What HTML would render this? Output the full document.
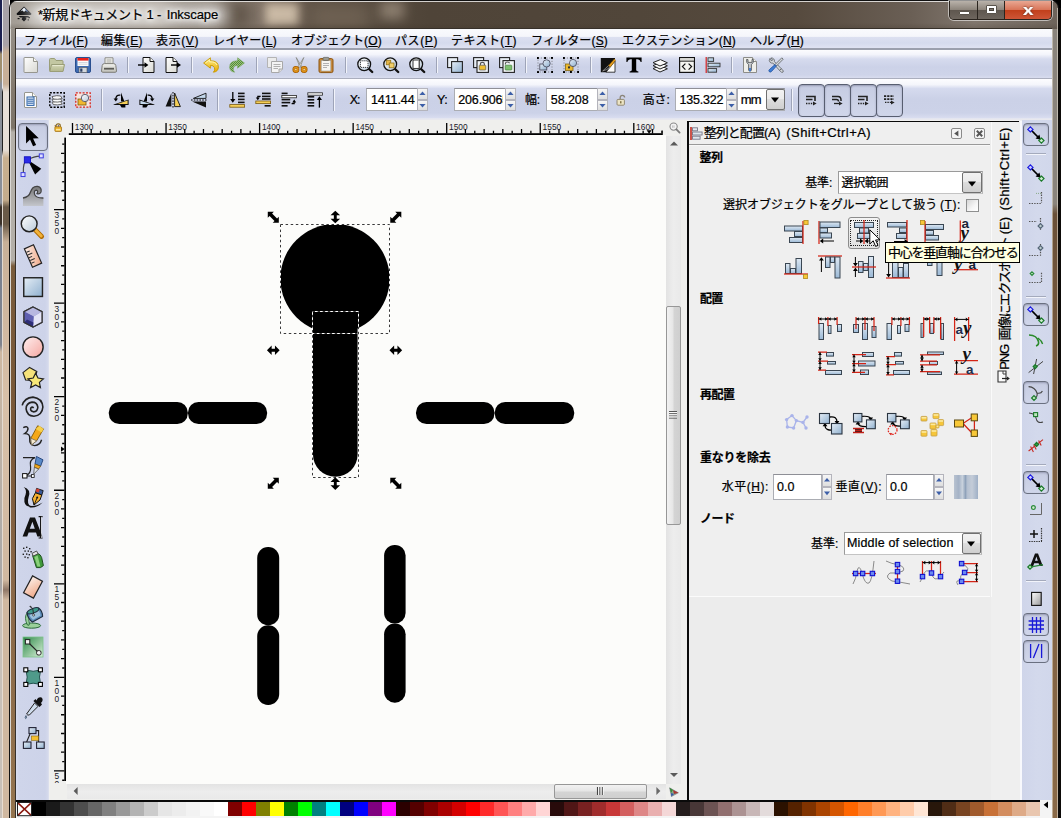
<!DOCTYPE html>
<html lang="ja">
<head>
<meta charset="utf-8">
<title>Inkscape</title>
<style>
html,body{margin:0;padding:0;}
body{width:1061px;height:818px;overflow:hidden;position:relative;background:#000;font-family:"Liberation Sans","Noto Sans CJK JP",sans-serif;font-size:12px;color:#000;}
.a{position:absolute;}
.t{position:absolute;white-space:nowrap;line-height:1;transform-origin:0 0;-webkit-text-stroke:.22px currentColor;}
u{text-decoration:underline;text-underline-offset:1px;}
svg{position:absolute;overflow:visible;}
.b{font-weight:bold;}
.inp{position:absolute;background:#fff;border:1px solid #abadb3;border-top-color:#8e8f96;box-sizing:border-box;}
.spin{position:absolute;width:11px;background:linear-gradient(#f6f6f6,#dedede);border:1px solid #b4b4bc;box-sizing:border-box;}
.tog{position:absolute;box-sizing:border-box;border:1px solid #585e70;border-radius:4px;background:linear-gradient(#c6cce2,#d0d6ea);box-shadow:inset 0 1px 2px rgba(60,60,90,.35);}
.sep{position:absolute;width:1px;background:#9ea4b8;box-shadow:1px 0 0 #f2f4fb;}
.hsep{position:absolute;height:1px;background:#a4aabc;box-shadow:0 1px 0 #f2f4fb;}

.rl{position:absolute;font-size:8.4px;line-height:1;color:#1a1a2a;white-space:nowrap;}
</style>
</head>
<body>
<div class="a" style="left:0;top:0;width:3px;height:818px;background:linear-gradient(#1c2050 0,#1c2050 50px,#a09070 54px,#a09070 78px,#8a8f98 84px,#8a8f98 203px,#3a3028 207px,#3a3028 224px,#788090 228px,#80848e 345px,#cdb8a2 352px,#b0aca8 530px,#a8a6a6 590px,#c8c0b8 596px,#c8c0b8 818px)"></div>
<div class="a" style="left:2.3px;top:0;width:1px;height:818px;background:linear-gradient(#e8e8ee 0,#e8e8ee 88px,#222 92px,#222 150px,#e0d8d0 156px,#e8dcd0 818px)"></div>
<div class="a" style="left:3.2px;top:0;width:5.6px;height:818px;background:linear-gradient(#a8a2a8 0,#a8a2a8 45px,#c8b098 52px,#c8b098 84px,#e8e0d8 92px,#e6ded6 150px,#c8b090 158px,#c4ac8c 200px,#6a5a48 207px,#6a5a48 224px,#c8b098 242px,#d8c0a8 400px,#d0b8a0 580px,#907868 590px,#d0b8a0 600px,#d0b8a0 818px)"></div>
<div class="a" style="left:8.6px;top:0;width:1px;height:818px;background:#f4f2f0"></div>
<div class="a" style="left:9px;top:0;width:1050px;height:830px;border-radius:8px 8px 0 0;background:#111"></div>
<div class="a" id="glass" style="left:10px;top:1px;width:1048px;height:830px;overflow:hidden;border-radius:7px 7px 0 0;background:linear-gradient(90deg,#a39d95 0%,#a9a299 6%,#aaa298 17%,#8f857b 21%,#7a6c5f 25%,#5c5044 29%,#4f4438 40%,#51463a 60%,#564a3e 75%,#6a5f55 86%,#80766d 92%,#6e645b 100%)"><div class="a" style="left:255px;top:2px;width:34px;height:22px;background:#d9c8b2;filter:blur(5px);opacity:.85"></div><div class="a" style="left:160px;top:0;width:40px;height:28px;background:#6e6358;filter:blur(8px);opacity:.8"></div><div class="a" style="left:370px;top:0;width:24px;height:18px;background:#9a8c7c;filter:blur(6px);opacity:.8"></div><div class="a" style="left:300px;top:4px;width:60px;height:24px;background:#7a6c5c;filter:blur(9px);opacity:.7"></div><div class="a" style="left:205px;top:0;width:36px;height:28px;background:#5a4e42;filter:blur(7px);opacity:.8"></div><div class="a" style="left:0;top:0;width:1048px;height:1px;background:rgba(255,255,255,.75)"></div><div class="a" style="left:0;top:0;width:1px;height:830px;background:rgba(255,255,255,.6)"></div><div class="a" style="left:0;top:22px;width:1048px;height:6px;background:linear-gradient(rgba(60,50,40,0),rgba(60,50,40,.25))"></div></div>
<div class="a" style="left:10.6px;top:28px;width:4.2px;height:790px;background:linear-gradient(#958f87 0,#847a6e 62px,#7c7468 100px,#b4b0a8 104px,#b4b0a8 232px,#7a5c3c 238px,#7a5838 400px,#8a6848 560px,#94744e 790px)"></div>
<div class="a" style="left:14.6px;top:28px;width:.7px;height:790px;background:rgba(220,214,200,.7)"></div>
<div class="a" style="left:1052px;top:29px;width:6.4px;height:789px;background:linear-gradient(#8a847c 0,#8a847c 175px,#6a5038 185px,#7a5c40 400px,#8a6a48 789px)"></div>
<div class="a" style="left:1052px;top:29px;width:1px;height:789px;background:rgba(230,224,210,.55)"></div>
<div class="a" style="left:1057.4px;top:8px;width:1px;height:810px;background:rgba(230,224,214,.6)"></div>
<div class="a" style="left:1058.4px;top:8px;width:3px;height:810px;background:#0c0a08"></div>
<div class="a" style="left:15px;top:28.2px;width:1037px;height:1px;background:#3e362e"></div>
<div class="a" style="left:15px;top:28px;width:1037px;height:790px;background:#37312a"></div>
<svg style="left:16px;top:6px" width="16" height="17" viewBox="0 0 16 17"><path d="M8 .5 L15.3 7.6 Q15.8 8.6 14.6 9 L1.4 9 Q.2 8.6 .7 7.6 Z" fill="#0a0a0c"/><path d="M8 1.6 L11.8 5.3 L9.6 4.6 L8 6 L6.6 4.4 L4.4 5.6 Z" fill="#e8eef6"/><path d="M9 2.6 L12.6 6.2 L10 5.2 Z" fill="#3a5f9a"/><path d="M2.6 10 H13.4 L11.6 11.6 H9.6 L10.6 13 L8 15.6 L5.6 13.2 L6.6 11.6 H4.4 Z" fill="#0a0a0c"/><rect x="1.6" y="12" width="2" height="1.2" fill="#0a0a0c"/><rect x="12.2" y="11" width="1.8" height="1.2" fill="#0a0a0c"/><rect x="11.6" y="13.4" width="1.4" height="1" fill="#0a0a0c"/></svg>
<div class="a" style="left:26px;top:3px;width:204px;height:24px;border-radius:12px;background:rgba(255,255,255,.5);filter:blur(6px)"></div>
<div class="t" style="left:38px;top:8px;font-size:13px;letter-spacing:-0.45px;text-shadow:0 0 4px #fff,0 0 6px #fff,0 0 9px #fff,0 0 12px rgba(255,255,255,.9)">*新規ドキュメント</div>
<div class="t" style="left:146.6px;top:8px;font-size:13px;letter-spacing:-3.03px;text-shadow:0 0 4px #fff,0 0 6px #fff,0 0 9px #fff,0 0 12px rgba(255,255,255,.9)">1</div>
<div class="t" style="left:157px;top:8px;font-size:13px;letter-spacing:-0.14px;text-shadow:0 0 4px #fff,0 0 6px #fff,0 0 9px #fff,0 0 12px rgba(255,255,255,.9)">-</div>
<div class="t" style="left:166.7px;top:8px;font-size:13px;letter-spacing:-0.08px;text-shadow:0 0 4px #fff,0 0 6px #fff,0 0 9px #fff,0 0 12px rgba(255,255,255,.9)">Inkscape</div>
<div class="a" style="left:949px;top:1px;width:103px;height:19px;border-radius:0 0 5px 5px;border:1px solid #2a241e;border-top:none;box-shadow:0 0 0 1px rgba(255,255,255,.55);box-sizing:border-box;overflow:hidden"><div class="a" style="left:0;top:0;width:27px;height:19px;background:linear-gradient(#b9b2aa 0,#8d857c 45%,#5f574f 50%,#6f675f 100%);border-right:1px solid #2a241e"></div><div class="a" style="left:28px;top:0;width:26px;height:19px;background:linear-gradient(#b9b2aa 0,#8d857c 45%,#5f574f 50%,#6f675f 100%);border-right:1px solid #2a241e"></div><div class="a" style="left:55px;top:0;width:48px;height:19px;background:linear-gradient(#e9a792 0,#d9765a 45%,#c2401c 50%,#d0583a 100%)"></div><div class="a" style="left:9px;top:10px;width:11px;height:4px;background:#fff;border:1px solid #5a544c;box-sizing:border-box;border-radius:1px"></div><div class="a" style="left:36px;top:4px;width:11px;height:9px;border:1px solid #5a544c;background:#fff;box-sizing:border-box;border-radius:1px"><div class="a" style="left:2px;top:2px;width:5px;height:3px;background:#7d766e;border:1px solid #4a443c;box-sizing:border-box"></div></div><div class="t b" style="left:73px;top:1px;font-size:15px;color:#fff;text-shadow:0 0 2px #5a2010,0 0 1px #5a2010;transform:scaleX(1.25)">x</div></div>
<div class="a" style="left:16px;top:29px;width:1036px;height:789px;background:#f0f0f0"></div>
<div class="a" style="left:16px;top:29px;width:1036px;height:20.5px;background:linear-gradient(#f9fafd 0,#f5f6fb 7.4px,#dce0f0 8.2px,#d5daed 14px,#dfe2f2 19px,#9b9fad 19.5px,#9b9fad 20.5px)"></div>
<div class="t" style="left:24px;top:35px;font-size:12px;letter-spacing:0.09px;">ファイル(<u>F</u>)</div>
<div class="t" style="left:101px;top:35px;font-size:12px;letter-spacing:0.40px;">編集(<u>E</u>)</div>
<div class="t" style="left:156px;top:35px;font-size:12px;letter-spacing:0.60px;">表示(<u>V</u>)</div>
<div class="t" style="left:213px;top:35px;font-size:12px;letter-spacing:0.24px;">レイヤー(<u>L</u>)</div>
<div class="t" style="left:291px;top:35px;font-size:12px;letter-spacing:0.18px;">オブジェクト(<u>O</u>)</div>
<div class="t" style="left:395px;top:35px;font-size:12px;letter-spacing:0.60px;">パス(<u>P</u>)</div>
<div class="t" style="left:451px;top:35px;font-size:12px;letter-spacing:0.43px;">テキスト(<u>T</u>)</div>
<div class="t" style="left:531px;top:35px;font-size:12px;letter-spacing:0.15px;">フィルター(<u>S</u>)</div>
<div class="t" style="left:622px;top:35px;font-size:12px;letter-spacing:0.15px;">エクステンション(<u>N</u>)</div>
<div class="t" style="left:750px;top:35px;font-size:12px;letter-spacing:0.22px;">ヘルプ(<u>H</u>)</div>
<div class="a" style="left:16px;top:49.5px;width:1036px;height:29.5px;background:linear-gradient(#fcfcfe 0,#f3f4fb 4.5px,#d6dbee 9px,#ccd2e8 17px,#ced4e9 25px,#d9ddef 28.2px,#9b9fad 28.6px,#9b9fad 29.5px)"></div>
<div class="a" style="left:16px;top:79px;width:1036px;height:40.5px;background:linear-gradient(#fdfdff 0,#f4f5fb 5.7px,#d5daee 9.6px,#cbd1e7 20px,#ccd2e8 34px,#d9ddf0 39px,#e6e7f0 39.6px,#e8e8ee 40.5px)"></div>
<svg width="0" height="0" style="left:0;top:0"><defs>
<linearGradient id="gPage" x1="0" y1="0" x2="1" y2="1"><stop offset="0" stop-color="#ffffff"/><stop offset="1" stop-color="#d8d8d2"/></linearGradient>
<linearGradient id="gBlue" x1="0" y1="0" x2="1" y2="1"><stop offset="0" stop-color="#e6eef6"/><stop offset="1" stop-color="#8fb0cf"/></linearGradient>
<linearGradient id="gBlueV" x1="0" y1="0" x2="0" y2="1"><stop offset="0" stop-color="#dfe9f3"/><stop offset="1" stop-color="#9bb9d6"/></linearGradient>
<linearGradient id="gFold" x1="0" y1="0" x2="0" y2="1"><stop offset="0" stop-color="#d3d6b4"/><stop offset="1" stop-color="#b3b78e"/></linearGradient>
<linearGradient id="gYel" x1="0" y1="0" x2="0" y2="1"><stop offset="0" stop-color="#fff08a"/><stop offset="1" stop-color="#e8a800"/></linearGradient>
<linearGradient id="gLens" x1="0" y1="0" x2="1" y2="1"><stop offset="0" stop-color="#ffffff"/><stop offset="1" stop-color="#b9c9d9"/></linearGradient>
<linearGradient id="gGray" x1="0" y1="0" x2="0" y2="1"><stop offset="0" stop-color="#f4f4f0"/><stop offset="1" stop-color="#bdbdb6"/></linearGradient>
<linearGradient id="gPink" x1="0" y1="0" x2="1" y2="1"><stop offset="0" stop-color="#fff0f0"/><stop offset="1" stop-color="#f4a6a0"/></linearGradient>
<linearGradient id="gPeach" x1="0" y1="0" x2="1" y2="1"><stop offset="0" stop-color="#fdf0e8"/><stop offset="1" stop-color="#efa888"/></linearGradient>
<linearGradient id="gGreen" x1="0" y1="0" x2="1" y2="1"><stop offset="0" stop-color="#b8e0b0"/><stop offset="1" stop-color="#3f9a52"/></linearGradient>
<pattern id="pDith" width="2" height="2" patternUnits="userSpaceOnUse"><rect width="2" height="2" fill="#9ec27a"/><rect width="1" height="1" fill="#4f8a3a"/><rect x="1" y="1" width="1" height="1" fill="#4f8a3a"/></pattern>
</defs></svg>
<svg style="left:23px;top:57px" width="16" height="16" viewBox="0 0 16 16"><path d="M1 1 Q1 .5 1.5 .5 H10.5 L14.5 4.5 V15 Q14.5 15.5 14 15.5 H1.5 Q1 15.5 1 15 Z" fill="url(#gPage)" stroke="#96968f"/><path d="M10.5 .5 V4.5 H14.5" fill="#fafaf6" stroke="#96968f"/></svg>
<svg style="left:49px;top:57px" width="16" height="16" viewBox="0 0 16 16"><path d="M.5 2.5 Q.5 1.5 1.5 1.5 H5.5 L7 3.5 H13 Q14 3.5 14 4.5 V13.5 H.5 Z" fill="#c3c7a2" stroke="#9a9e78"/><path d="M2.5 7.5 H15.5 L14 14.5 H.8 Z" fill="url(#gFold)" stroke="#9a9e78"/><path d="M3.4 8.6 H14.2" stroke="#e8ead2" fill="none"/></svg>
<svg style="left:75px;top:57px" width="16" height="16" viewBox="0 0 16 16"><rect x=".5" y=".5" width="15" height="15" rx="1.5" fill="#3e6cb3" stroke="#2a4f8f"/><rect x="2.5" y="1" width="11" height="8" fill="#fbfbfb"/><rect x="2.5" y="1" width="11" height="2.6" fill="#e8221a"/><path d="M3.5 5.5H12.5M3.5 7.2H12.5" stroke="#c9cfd8" stroke-width=".8"/><rect x="4" y="10.5" width="8" height="5" fill="#d4d8dc" stroke="#555" stroke-width=".6"/><rect x="5.2" y="11.5" width="2.2" height="3.2" fill="#2a3f66"/></svg>
<svg style="left:101px;top:57px" width="16" height="16" viewBox="0 0 16 16"><path d="M4 7 V.8 H12 V7" fill="#f6f6f2" stroke="#8a8a84"/><path d="M5.5 3H10.5M5.5 5H10.5" stroke="#a0a09a"/><path d="M1.2 8.5 Q1.5 6.6 3.5 6.6 H12.5 Q14.5 6.6 14.8 8.5 L15.5 14 Q15.5 15.3 14.2 15.3 H1.8 Q.5 15.3 .5 14 Z" fill="url(#gGray)" stroke="#7e7e78"/><rect x="3" y="10.8" width="10" height="1.8" fill="#5a5a55"/></svg>
<svg style="left:139px;top:57px" width="16" height="16" viewBox="0 0 16 16"><g transform="translate(3.5,0)"><path d="M.5 .5 H7.5 L11.5 4.5 V15.5 H.5 Z" fill="url(#gPage)" stroke="#111"/><path d="M7.5 .5 V4.5 H11.5" fill="#fafaf6" stroke="#111"/></g><path d="M-1 8 H7" stroke="#000" stroke-width="1.4"/><path d="M5.5 5.2 L9.4 8 L5.5 10.8 Z" fill="#000"/></svg>
<svg style="left:165px;top:57px" width="16" height="16" viewBox="0 0 16 16"><g transform="translate(.5,0)"><path d="M.5 .5 H7.5 L11.5 4.5 V15.5 H.5 Z" fill="url(#gPage)" stroke="#111"/><path d="M7.5 .5 V4.5 H11.5" fill="#fafaf6" stroke="#111"/></g><path d="M6 8 H13" stroke="#000" stroke-width="1.4"/><path d="M12 5.2 L16 8 L12 10.8 Z" fill="#000"/></svg>
<svg style="left:203px;top:57px" width="16" height="16" viewBox="0 0 16 16"><path d="M.6 6 L7.4 .8 V3.8 Q15.5 3.6 15.4 10.2 Q15.2 14.6 10.4 15.2 Q12.6 13.2 11.4 10.6 Q10.6 8.2 7.4 8.4 V11.2 Z" fill="url(#gYel)" stroke="#c89a00" stroke-width=".9"/><path d="M2.4 6 L6.6 2.8 V4.8 Q12.5 4.5 14 8" fill="none" stroke="#fff7b8" stroke-width=".9"/></svg>
<svg style="left:229px;top:57px" width="16" height="16" viewBox="0 0 16 16"><path d="M15.4 6 L8.6 .8 V3.8 Q.5 3.6 .6 10.2 Q.8 14.6 5.6 15.2 Q3.4 13.2 4.6 10.6 Q5.4 8.2 8.6 8.4 V11.2 Z" fill="url(#pDith)" stroke="#7aa860" stroke-width=".6"/></svg>
<svg style="left:267px;top:57px" width="16" height="16" viewBox="0 0 16 16"><path d="M.5 .5 H9.5 V10.5 H.5 Z" fill="#ececec" stroke="#b4b4b4"/><path d="M4.5 4.5 H15.5 V12 L12 15.5 H4.5 Z" fill="#f4f4f4" stroke="#a8a8a8"/><path d="M6.5 7.5H13.5M6.5 9.5H13.5M6.5 11.5H11" stroke="#b0b0b0"/><path d="M15.5 12 H12 V15.5" fill="#ddd" stroke="#a8a8a8"/></svg>
<svg style="left:292px;top:57px" width="16" height="16" viewBox="0 0 16 16"><path d="M4.2 .5 L9.6 9.5 L8 10.4 Z" fill="#d8d8d2" stroke="#7e7e76" stroke-width=".7"/><path d="M11.8 .5 L6.4 9.5 L8 10.4 Z" fill="#eeeeea" stroke="#7e7e76" stroke-width=".7"/><rect x="1" y="9.6" width="5.8" height="5.8" rx="2" fill="#e89a18" stroke="#a85e00"/><rect x="9.2" y="9.6" width="5.8" height="5.8" rx="2" fill="#e89a18" stroke="#a85e00"/><rect x="2.9" y="11.5" width="2" height="2" fill="#f6e2b6" stroke="#a85e00" stroke-width=".5"/><rect x="11.1" y="11.5" width="2" height="2" fill="#f6e2b6" stroke="#a85e00" stroke-width=".5"/></svg>
<svg style="left:318px;top:57px" width="16" height="16" viewBox="0 0 16 16"><rect x="1" y="1.6" width="14" height="14" rx="1.6" fill="#c98a3a" stroke="#8c5410"/><rect x="3.2" y="3.6" width="9.6" height="10.4" fill="#f6f6f2" stroke="#9a9a92" stroke-width=".6"/><rect x="5" y=".4" width="6" height="3" rx="1" fill="#9c9c96" stroke="#5e5e58" stroke-width=".7"/><path d="M5 6.5H11M5 8.5H11M5 10.5H9" stroke="#aaa" stroke-width=".9"/></svg>
<svg style="left:357px;top:57px" width="16" height="16" viewBox="0 0 16 16"><path d="M11 11 L15.2 15" stroke="#111" stroke-width="2.4" stroke-linecap="round"/><circle cx="7.2" cy="7.2" r="6.4" fill="url(#gLens)" stroke="#111" stroke-width="1.3"/><rect x="3.4" y="3.8" width="7.6" height="6.6" fill="#fff" stroke="#111" stroke-width="1" stroke-dasharray="1 1"/></svg>
<svg style="left:383px;top:57px" width="16" height="16" viewBox="0 0 16 16"><path d="M11 11 L15.2 15" stroke="#111" stroke-width="2.4" stroke-linecap="round"/><circle cx="7.2" cy="7.2" r="6.4" fill="url(#gLens)" stroke="#111" stroke-width="1.3"/><rect x="3.2" y="3.2" width="4.6" height="4.6" fill="#e8b84a" stroke="#8a6a10" stroke-width=".7"/><rect x="6.2" y="6" width="4.8" height="4.8" fill="#f2cf6a" stroke="#8a6a10" stroke-width=".7"/></svg>
<svg style="left:409px;top:57px" width="16" height="16" viewBox="0 0 16 16"><path d="M11 11 L15.2 15" stroke="#111" stroke-width="2.4" stroke-linecap="round"/><circle cx="7.2" cy="7.2" r="6.4" fill="url(#gLens)" stroke="#111" stroke-width="1.3"/><rect x="4" y="3" width="6.4" height="8.4" fill="#fff" stroke="#222" stroke-width=".9"/><path d="M9.8 4 V11" stroke="#999" stroke-width="1"/></svg>
<svg style="left:447px;top:57px" width="16" height="16" viewBox="0 0 16 16"><rect x=".6" y=".6" width="10" height="10" fill="#e8eef5" stroke="#222" stroke-width="1.1"/><rect x="4.6" y="4.6" width="10.8" height="10.8" fill="url(#gBlue)" stroke="#222" stroke-width="1.1"/></svg>
<svg style="left:473px;top:57px" width="16" height="16" viewBox="0 0 16 16"><rect x=".6" y=".6" width="10" height="10" fill="#e8eef5" stroke="#222" stroke-width="1.1"/><rect x="4" y="3.6" width="11.4" height="11.8" fill="#f4f6f8" stroke="#222" stroke-width="1.1"/><path d="M7.4 8.4 V7 Q7.4 5.4 9.4 5.4 Q11.4 5.4 11.4 7 V8.4" fill="none" stroke="#555" stroke-width="1.1"/><rect x="6.2" y="8.2" width="6.6" height="4.8" rx=".6" fill="#f0c030" stroke="#555" stroke-width=".7"/></svg>
<svg style="left:499px;top:57px" width="16" height="16" viewBox="0 0 16 16"><rect x=".6" y=".6" width="10" height="10" fill="#e8eef5" stroke="#222" stroke-width="1.1"/><rect x="4" y="3.6" width="11.4" height="11.8" fill="#f4f6f8" stroke="#222" stroke-width="1.1"/><path d="M6.4 7.6 V6.6 Q6.4 5 8.4 5 Q10.4 5 10.4 6.2" fill="none" stroke="#555" stroke-width="1.1"/><rect x="6.2" y="8.2" width="6.6" height="4.8" rx=".6" fill="#7fc070" stroke="#3f7f3a" stroke-width=".7"/></svg>
<svg style="left:537px;top:57px" width="16" height="16" viewBox="0 0 16 16"><rect x="0" y="0" width="2" height="2" fill="#000"/><rect x="14" y="0" width="2" height="2" fill="#000"/><rect x="0" y="14" width="2" height="2" fill="#000"/><rect x="14" y="14" width="2" height="2" fill="#000"/><rect x="7" y="0" width="2" height="2" fill="#000"/><rect x="7" y="14" width="2" height="2" fill="#000"/><path d="M1 1H15V15H1Z" fill="none" stroke="#555" stroke-width=".6" stroke-dasharray="1.2 1.6"/><rect x="2.8" y="7" width="7" height="6" fill="url(#gBlue)" stroke="#445" stroke-width=".8"/><circle cx="9.6" cy="6.4" r="3.6" fill="url(#gBlue)" stroke="#445" stroke-width=".8"/></svg>
<svg style="left:563px;top:57px" width="16" height="16" viewBox="0 0 16 16"><rect x="0" y="0" width="2" height="2" fill="#000"/><rect x="14" y="0" width="2" height="2" fill="#000"/><rect x="0" y="14" width="2" height="2" fill="#000"/><rect x="14" y="14" width="2" height="2" fill="#000"/><rect x="7" y="0" width="2" height="2" fill="#000"/><rect x="7" y="14" width="2" height="2" fill="#000"/><path d="M1 1H15V15H1Z" fill="none" stroke="#555" stroke-width=".6" stroke-dasharray="1.2 1.6"/><rect x="2.4" y="7" width="7.6" height="6.4" fill="#eab830" stroke="#8a6a10" stroke-width=".8"/><circle cx="10" cy="6" r="3.6" fill="url(#gBlue)" stroke="#445" stroke-width=".8"/><rect x="5" y="9.4" width="2" height="2" fill="#333"/></svg>
<svg style="left:600px;top:57px" width="16" height="16" viewBox="0 0 16 16"><path d="M.8 1 H15 V4 L6 15.2 H.8 Z" fill="#111"/><path d="M15 4 V15.2 H6 Z" fill="#fafafa" stroke="#111" stroke-width=".8"/><path d="M2.6 14 Q5 12 8.6 8.4 L10.4 10 Q6.4 13.4 2.6 14Z" fill="#222" stroke="#ddd" stroke-width=".5"/><path d="M8.6 8.4 L14.4 2 L15.6 3.2 L10.4 10 Z" fill="#e8a020" stroke="#8a5a00" stroke-width=".5"/></svg>
<svg style="left:626px;top:57px" width="16" height="16" viewBox="0 0 16 16"><path d="M.4 .6 H15.6 V5 H14.6 Q14 2.2 11 2.2 H10.2 V13 Q10.2 14.4 12.4 14.6 V15.6 H3.6 V14.6 Q5.8 14.4 5.8 13 V2.2 H5 Q2 2.2 1.4 5 H.4 Z" fill="#000"/></svg>
<svg style="left:652px;top:57px" width="16" height="16" viewBox="0 0 16 16"><path d="M1 11.6 L8.4 8.6 L15.4 11.8 L8 15 Z" fill="#fafafa" stroke="#222" stroke-width="1"/><path d="M1 8.6 L8.4 5.6 L15.4 8.8 L8 12 Z" fill="#fafafa" stroke="#222" stroke-width="1"/><path d="M1 5.6 L8.4 2.6 L15.4 5.8 L8 9 Z" fill="#fafafa" stroke="#222" stroke-width="1"/></svg>
<svg style="left:679px;top:57px" width="16" height="16" viewBox="0 0 16 16"><rect x=".6" y=".6" width="14.8" height="14.8" fill="#f4f4f0" stroke="#111" stroke-width="1.2"/><rect x="1.2" y="1.2" width="13.6" height="2.6" fill="#d8d8d4"/><path d="M1 4.2H15" stroke="#111" stroke-width=".9"/><path d="M6.4 6.6 L3.4 9.6 L6.4 12.6M9.6 6.6 L12.6 9.6 L9.6 12.6" fill="none" stroke="#111" stroke-width="1.2"/></svg>
<svg style="left:705px;top:57px" width="16" height="16" viewBox="0 0 16 16"><path d="M1.2 0V16" stroke="#d42020" stroke-width="1.2"/><rect x="3" y=".8" width="5.6" height="3.6" fill="url(#gBlue)" stroke="#333" stroke-width=".9"/><rect x="3" y="6.2" width="12" height="3.6" fill="url(#gBlue)" stroke="#333" stroke-width=".9"/><rect x="3" y="11.6" width="8.6" height="3.6" fill="url(#gBlue)" stroke="#333" stroke-width=".9"/></svg>
<svg style="left:742px;top:57px" width="16" height="16" viewBox="0 0 16 16"><path d="M1.5 .5 H10.5 L14.5 4.5 V15.5 H1.5 Z" fill="#eeeeea" stroke="#8c8c88"/><path d="M10.5 .5 V4.5 H14.5" fill="#fafaf6" stroke="#8c8c88"/><path d="M4.6 2.4 Q4 6.4 6.6 7.4 V13.4 Q8 14.6 9.4 13.4 V7.4 Q12 6.4 11.4 2.4 L10 2.6 V5.4 H6 V2.6 Z" fill="#c8ccd0" stroke="#4a4e52" stroke-width=".8"/><rect x="7.2" y="11" width="1.6" height="3.4" fill="#2f6fd0"/></svg>
<svg style="left:768px;top:57px" width="16" height="16" viewBox="0 0 16 16"><path d="M2 1.4 Q.4 3.6 2.2 5.4 Q3.4 6.4 4.8 6 L11.6 13.4 L13.4 11.8 L6.4 4.6 Q6.8 3 5.6 1.8 Q4.4 .6 2.8 1 L4.6 2.8 L3.6 4 Z" fill="#d4d8dc" stroke="#5a5e62" stroke-width=".8"/><path d="M13.8 .8 L15.2 2.2 L8.4 9 L7 7.6 Z" fill="#d4d8dc" stroke="#5a5e62" stroke-width=".8"/><path d="M7 7.6 L8.4 9 L3.4 14.6 Q2.2 15.6 1.2 14.6 Q.4 13.6 1.4 12.6 Z" fill="#3f7fd8" stroke="#1f4f9a" stroke-width=".8"/><path d="M11.6 13.4 L13.4 11.8 L15.4 14 Q15.4 15.6 13.6 15.4Z" fill="#d4d8dc" stroke="#5a5e62" stroke-width=".8"/></svg>
<div class="sep" style="left:127px;top:57px;height:16px"></div>
<div class="sep" style="left:191px;top:57px;height:16px"></div>
<div class="sep" style="left:255.5px;top:57px;height:16px"></div>
<div class="sep" style="left:344.5px;top:57px;height:16px"></div>
<div class="sep" style="left:435.5px;top:57px;height:16px"></div>
<div class="sep" style="left:524.5px;top:57px;height:16px"></div>
<div class="sep" style="left:589.5px;top:57px;height:16px"></div>
<div class="sep" style="left:730.5px;top:57px;height:16px"></div>
<svg style="left:23px;top:92px" width="16" height="16" viewBox="0 0 16 16"><path d="M1.5 1 Q1.5 .5 2 .5 H9.5 L13.5 4.5 V15 Q13.5 15.5 13 15.5 H2 Q1.5 15.5 1.5 15 Z" fill="#fbfbfb" stroke="#96968f"/><path d="M9.5 .5 V4.5 H13.5" fill="#fafaf6" stroke="#96968f"/><rect x="4" y="5" width="7" height="8.4" fill="#e6eef8" stroke="#2a62a8" stroke-width="1"/><path d="M4.5 7.2H10.5M4.5 9.2H10.5M4.5 11.2H10.5" stroke="#2a62a8" stroke-width="1"/></svg>
<svg style="left:49px;top:92px" width="16" height="16" viewBox="0 0 16 16"><rect x=".8" y=".8" width="14.4" height="14.4" fill="none" stroke="#000" stroke-width="1.4" stroke-dasharray="2 1.4"/><path d="M3 10.2 Q8 8.6 11.6 9.6 L13.2 12.2 Q8 13.4 4.4 12.6 Z" fill="#fafafa" stroke="#444" stroke-width=".8"/><path d="M3 7.4 Q8 5.8 11.6 6.8 L13.2 9.4 Q8 10.6 4.4 9.8 Z" fill="#fafafa" stroke="#444" stroke-width=".8"/><path d="M3 4.6 Q8 3 11.6 4 L13.2 6.6 Q8 7.8 4.4 7 Z" fill="#fafafa" stroke="#444" stroke-width=".8"/></svg>
<svg style="left:75px;top:92px" width="16" height="16" viewBox="0 0 16 16"><rect x=".8" y=".8" width="14.4" height="14.4" fill="#f6e4e0" stroke="#d8241c" stroke-width="1.3" stroke-dasharray="2 1.4"/><rect x="3" y="7" width="8" height="6" fill="#f0b830" stroke="#7a5a10" stroke-width=".8"/><circle cx="10" cy="6" r="3.7" fill="url(#gLens)" stroke="#556" stroke-width=".9"/></svg>
<svg style="left:113px;top:92px" width="16" height="16" viewBox="0 0 16 16"><path d="M8 .4 L11.4 9.6 H8 Z" fill="#000"/><path d="M.6 12.6 L15.6 7.4 V13 H.6Z" fill="#111"/><path d="M4.4 12 L14.6 8.6 V12 Z" fill="#f5cf58"/><path d="M7 13 H12.4 V15.6 H8.6 Z" fill="#000"/><path d="M7.4 3.2 Q2.6 2.6 2.8 7.6" fill="none" stroke="#000" stroke-width="1.3"/><path d="M.6 6.6 H5 L2.8 9.4Z" fill="#000"/></svg>
<svg style="left:139px;top:92px" width="16" height="16" viewBox="0 0 16 16"><path d="M8 .4 L4.6 9.6 H8 Z" fill="#000"/><path d="M.4 7.4 L15.4 12.6 V13 H.4Z" fill="#111"/><path d="M1.4 8.8 L11.6 12 H1.4 Z" fill="#c4d8ec"/><path d="M3.6 13 H9 L7.4 15.6 H3.6 Z" fill="#000"/><path d="M8.6 3.2 Q13.4 2.6 13.2 7.6" fill="none" stroke="#000" stroke-width="1.3"/><path d="M11 6.6 H15.4 L13.2 9.4Z" fill="#000"/></svg>
<svg style="left:164.5px;top:92px" width="16" height="16" viewBox="0 0 16 16"><path d="M6.4 1 V14.6 H.6 Z" fill="#111"/><path d="M9.6 1 V14.6 H15.4 Z" fill="#f5cf58" stroke="#111" stroke-width=".9"/><path d="M8 0V16" stroke="#000" stroke-width="1" stroke-dasharray="1.6 1.2"/></svg>
<svg style="left:191px;top:92px" width="16" height="16" viewBox="0 0 16 16"><path d="M15 9.6 H1 L15 15.4 Z" fill="#111"/><path d="M15 6.4 H2.4 L15 1.2 Z" fill="#c4d8ec" stroke="#111" stroke-width=".9"/><path d="M0 8H16" stroke="#000" stroke-width="1" stroke-dasharray="1.6 1.2"/></svg>
<svg style="left:229px;top:92px" width="16" height="16" viewBox="0 0 16 16"><rect x="9" y="0.6" width="6.6" height="1.6" fill="#111"/><rect x="9" y="3.6" width="6.6" height="1.6" fill="#111"/><rect x="9" y="6.6" width="6.6" height="1.6" fill="#111"/><rect x="9" y="9.6" width="6.6" height="1.6" fill="#111"/><rect x=".8" y="12.6" width="14.8" height="2.6" fill="#f5cf58" stroke="#7a5a10" stroke-width=".8"/><path d="M3.8 0V8" stroke="#000" stroke-width="1.3"/><path d="M1.2 7 H6.4 L3.8 10.8Z" fill="#000"/></svg>
<svg style="left:255px;top:92px" width="16" height="16" viewBox="0 0 16 16"><rect x="7" y="0.6" width="8.6" height="1.6" fill="#111"/><rect x="7" y="3.6" width="8.6" height="1.6" fill="#111"/><rect x="7" y="6.2" width="8.6" height="1.6" fill="#111"/><rect x="9.6" y="13" width="6" height="1.6" fill="#111"/><rect x=".8" y="9" width="14.8" height="2.6" fill="#f5cf58" stroke="#7a5a10" stroke-width=".8"/><path d="M5.6 4.4 H2.8 V6" stroke="#000" stroke-width="1.1" fill="none"/><path d="M.8 5.6 H4.8 L2.8 8.2Z" fill="#000"/></svg>
<svg style="left:281px;top:92px" width="16" height="16" viewBox="0 0 16 16"><rect x="0.6" y="0.6" width="6" height="1.6" fill="#111"/><rect x="0.6" y="6.8" width="8.6" height="1.6" fill="#111"/><rect x="0.6" y="9.8" width="8.6" height="1.6" fill="#111"/><rect x="0.6" y="13" width="6" height="1.6" fill="#111"/><rect x=".8" y="3.4" width="14.6" height="2.4" fill="#fafafa" stroke="#222" stroke-width=".8"/><path d="M10.6 11.6 H13.2 V10" stroke="#000" stroke-width="1.1" fill="none"/><path d="M11.2 10.4 H15.2 L13.2 7.6Z" fill="#000"/></svg>
<svg style="left:307px;top:92px" width="16" height="16" viewBox="0 0 16 16"><rect x="0.6" y="4" width="6.6" height="1.6" fill="#111"/><rect x="0.6" y="7" width="6.6" height="1.6" fill="#111"/><rect x="0.6" y="10" width="6.6" height="1.6" fill="#111"/><rect x="0.6" y="13" width="6.6" height="1.6" fill="#111"/><rect x=".8" y=".8" width="14.6" height="2.4" fill="#fafafa" stroke="#222" stroke-width=".8"/><path d="M12.4 15.6V7" stroke="#000" stroke-width="1.3"/><path d="M9.8 8 H15 L12.4 4.2Z" fill="#000"/></svg>
<div class="sep" style="left:101px;top:89px;height:22px"></div>
<div class="sep" style="left:217.2px;top:89px;height:22px"></div>
<div class="sep" style="left:333px;top:89px;height:22px"></div>
<div class="sep" style="left:791px;top:89px;height:22px"></div>
<div class="t" style="left:349.8px;top:93.5px;font-size:12.5px;letter-spacing:-1.16px;">X:</div>
<div class="inp" style="left:366px;top:88px;width:52px;height:23px;overflow:hidden"></div><div class="a" style="left:368px;top:90px;width:46.6px;height:19px;overflow:hidden"><div class="t" style="left:2.9px;top:4px;font-size:12.5px;letter-spacing:-0.08px;">1411.448</div></div><div class="spin" style="left:417px;top:88px;height:11.5px"></div><svg style="left:417px;top:88px" width="11" height="11"><path d="M2.4 7 L5.5 3.4 L8.6 7Z" fill="#3d5fa8"/></svg><div class="spin" style="left:417px;top:99.5px;height:11.5px"></div><svg style="left:417px;top:99.5px" width="11" height="11"><path d="M2.4 4 L5.5 7.6 L8.6 4Z" fill="#3d5fa8"/></svg>
<div class="t" style="left:437px;top:93.5px;font-size:12.5px;letter-spacing:-0.31px;">Y:</div>
<div class="inp" style="left:454px;top:88px;width:52px;height:23px;overflow:hidden"></div><div class="a" style="left:456px;top:90px;width:46.6px;height:19px;overflow:hidden"><div class="t" style="left:2.3px;top:4px;font-size:12.5px;letter-spacing:-0.17px;">206.9065</div></div><div class="spin" style="left:505px;top:88px;height:11.5px"></div><svg style="left:505px;top:88px" width="11" height="11"><path d="M2.4 7 L5.5 3.4 L8.6 7Z" fill="#3d5fa8"/></svg><div class="spin" style="left:505px;top:99.5px;height:11.5px"></div><svg style="left:505px;top:99.5px" width="11" height="11"><path d="M2.4 4 L5.5 7.6 L8.6 4Z" fill="#3d5fa8"/></svg>
<div class="t" style="left:525px;top:93.5px;font-size:12px;letter-spacing:-0.17px;">幅:</div>
<div class="inp" style="left:546px;top:88px;width:52px;height:23px;overflow:hidden"></div><div class="a" style="left:548px;top:90px;width:46.6px;height:19px;overflow:hidden"><div class="t" style="left:2.8px;top:4px;font-size:12.5px;letter-spacing:-0.07px;">58.208</div></div><div class="spin" style="left:597px;top:88px;height:11.5px"></div><svg style="left:597px;top:88px" width="11" height="11"><path d="M2.4 7 L5.5 3.4 L8.6 7Z" fill="#3d5fa8"/></svg><div class="spin" style="left:597px;top:99.5px;height:11.5px"></div><svg style="left:597px;top:99.5px" width="11" height="11"><path d="M2.4 4 L5.5 7.6 L8.6 4Z" fill="#3d5fa8"/></svg>
<svg style="left:615px;top:94px" width="12" height="12" viewBox="0 0 12 12"><path d="M5.2 5.6 V3.6 Q5.2 1.4 7.4 1.4 Q9.6 1.4 9.6 3.6" fill="none" stroke="#8a8478" stroke-width="1.3"/><rect x="2" y="5.4" width="7.4" height="5.8" rx="1" fill="#ece4c4" stroke="#8a8068" stroke-width=".9"/><rect x="5.2" y="7.2" width="1.2" height="2.2" fill="#6a5a2a"/></svg>
<div class="t" style="left:642.7px;top:93.5px;font-size:12px;letter-spacing:-0.15px;">高さ:</div>
<div class="inp" style="left:675px;top:88px;width:52px;height:23px;overflow:hidden"></div><div class="a" style="left:677px;top:90px;width:46.6px;height:19px;overflow:hidden"><div class="t" style="left:2.5px;top:4px;font-size:12.5px;letter-spacing:-0.20px;">135.322</div></div><div class="spin" style="left:726px;top:88px;height:11.5px"></div><svg style="left:726px;top:88px" width="11" height="11"><path d="M2.4 7 L5.5 3.4 L8.6 7Z" fill="#3d5fa8"/></svg><div class="spin" style="left:726px;top:99.5px;height:11.5px"></div><svg style="left:726px;top:99.5px" width="11" height="11"><path d="M2.4 4 L5.5 7.6 L8.6 4Z" fill="#3d5fa8"/></svg>
<div class="inp" style="left:737px;top:88px;width:48px;height:23px"></div>
<div class="t" style="left:740.8px;top:93px;font-size:13px;letter-spacing:-0.94px;">mm</div>
<div class="a" style="left:766px;top:89px;width:18.5px;height:21px;box-sizing:border-box;border:1px solid #707070;border-radius:2px;background:linear-gradient(#f2f2f2 0,#ebebeb 45%,#dddddd 50%,#cfcfcf 100%)"></div>
<svg style="left:770px;top:97px" width="10" height="6"><path d="M1 .6 H9 L5 5.4Z" fill="#000"/></svg>
<div class="tog" style="left:798px;top:83.5px;width:26.5px;height:33px"></div>
<svg style="left:805px;top:95px" width="12" height="11" viewBox="0 0 12 11"><path d="M1 1.5H10V6M1 4.5H7.5" stroke="#222" stroke-width="1.6" fill="none"/><path d="M1 8.5H9" stroke="#222" stroke-width="1.4" stroke-dasharray="1.4 1"/><path d="M8 6.6 L11.6 8.6 L8 10.6Z" fill="#222"/></svg>
<div class="tog" style="left:824px;top:83.5px;width:26.5px;height:33px"></div>
<svg style="left:831px;top:95px" width="12" height="11" viewBox="0 0 12 11"><path d="M1 1.5H7 Q10 1.5 10 5 V6M1 4.5H5.5 Q7.5 4.5 7.5 6.5" stroke="#222" stroke-width="1.5" fill="none"/><path d="M3 8.5H9" stroke="#222" stroke-width="1.3"/><path d="M8 6.6 L11.6 8.6 L8 10.6Z" fill="#222"/></svg>
<div class="tog" style="left:850px;top:83.5px;width:26.5px;height:33px"></div>
<svg style="left:857px;top:95px" width="12" height="11" viewBox="0 0 12 11"><path d="M1 1.5H10V6M1 4.5H7.5" stroke="#222" stroke-width="1.6" fill="none"/><path d="M1 8.5H9" stroke="#222" stroke-width="1.4" stroke-dasharray="1.4 1"/><path d="M8 6.6 L11.6 8.6 L8 10.6Z" fill="#222"/></svg>
<div class="tog" style="left:876px;top:83.5px;width:26.5px;height:33px"></div>
<svg style="left:883px;top:95px" width="12" height="11" viewBox="0 0 12 11"><path d="M1 1.2H11M1 4.2H11" stroke="#222" stroke-width="1.8" stroke-dasharray="2.2 1"/><path d="M2 7.4H9" stroke="#222" stroke-width="1.3" stroke-dasharray="1.4 1"/><path d="M8 5.6 L11.6 7.6 L8 9.6Z" fill="#222"/></svg>
<div class="a" style="left:50px;top:119.5px;width:637px;height:680.5px;background:#efefed"></div>
<div class="a" style="left:16px;top:119.5px;width:33px;height:680.5px;background:linear-gradient(90deg,#d9ddef 0,#cfd5ea 3px,#cdd3e9 29px,#d4d9ec 32px,#e0e3ee 33px)"></div>
<div class="tog" style="left:18px;top:123px;width:30px;height:27.5px;border-color:#6a7080"></div>
<svg style="left:21px;top:124px" width="24" height="24" viewBox="0 0 24 24"><g transform="translate(-1.6,.4) scale(.95)"><path d="M7 1.6 V20 L11.2 16 L14.4 23 L17.6 21.6 L14.4 14.8 L20.4 14.6 Z" fill="#000"/></g></svg>
<svg style="left:21px;top:154px" width="24" height="24" viewBox="0 0 24 24"><g transform="translate(-2.6,-1.2) scale(1.1)"><path d="M4.5 18.5 Q4 7.5 8.5 6.5 Q14 3 20 3" fill="none" stroke="#444" stroke-width="1"/><path d="M8.4 6.4 L20.8 14.6 L15.2 19.8 Z" fill="#000"/><rect x="5.4" y="3.6" width="5.6" height="5.6" fill="#2a2ae8" stroke="#1010c0" stroke-width=".8"/><rect x="19" y="1" width="3.6" height="3.6" fill="#dfe0ff" stroke="#3a3ae0" stroke-width=".9"/><rect x="2.4" y="18" width="3.6" height="3.6" fill="#dfe0ff" stroke="#3a3ae0" stroke-width=".9"/></g></svg>
<svg style="left:21px;top:184px" width="24" height="24" viewBox="0 0 24 24"><defs><linearGradient id="gTw" x1="0" y1="0" x2="0" y2="1"><stop offset="0" stop-color="#777"/><stop offset="1" stop-color="#c4c6cc"/></linearGradient></defs><path d="M2 14 Q8 13 9.5 8 Q11.5 1.8 16.6 2.4 Q21 3.4 20 8 Q18.6 10.6 16 9.6 Q17.6 7 15.4 6.2 Q12.6 6.4 13.6 10.4 Q15 14.2 22.4 14 V22 H2 Z" fill="url(#gTw)"/><path d="M2 14 Q8 13 9.5 8 Q11.5 1.8 16.6 2.4 Q21 3.4 20 8 Q18.6 10.6 16 9.6 Q17.6 7 15.4 6.2 Q12.6 6.4 13.6 10.4 Q15 14.2 22.4 14" fill="none" stroke="#444" stroke-width="1.3"/></svg>
<svg style="left:21px;top:214px" width="24" height="24" viewBox="0 0 24 24"><g transform="translate(-1.6,0) scale(1.04)"><path d="M14 14 L21.4 21.6" stroke="#b06a00" stroke-width="4.6" stroke-linecap="round"/><path d="M14.4 14.4 L21 21.2" stroke="#f2b23a" stroke-width="2.8" stroke-linecap="round"/><circle cx="9.4" cy="9.4" r="7.6" fill="url(#gLens)" stroke="#222" stroke-width="1.4"/></g></svg>
<svg style="left:21px;top:244px" width="24" height="24" viewBox="0 0 24 24"><g transform="rotate(-24 12 12)"><rect x="7" y="2" width="10" height="20" fill="url(#gPeach)" stroke="#222" stroke-width="1.2"/><path d="M7.6 6H11M7.6 9H12.6M7.6 12H11M7.6 15H12.6M7.6 18H11" stroke="#333" stroke-width="1"/></g></svg>
<svg style="left:21px;top:275px" width="24" height="24" viewBox="0 0 24 24"><g transform="translate(-1.2,-1.2) scale(1.1)"><rect x="3.6" y="3.6" width="17" height="17" fill="url(#gBlue)" stroke="#222" stroke-width="1.3"/></g></svg>
<svg style="left:21px;top:305px" width="24" height="24" viewBox="0 0 24 24"><path d="M12 2 L21 6.6 V17.4 L12 22 L3 17.4 V6.6 Z" fill="#6a6ab8" stroke="#333" stroke-width="1.2"/><path d="M12 2 L21 6.6 L12.6 11.4 L3 6.6Z" fill="#b8b8e0"/><path d="M12.6 11.4 L21 6.6 V17.4 L12 22Z" fill="#e4e4f6"/><path d="M3 6.6 L12.6 11.4 L12 22 L3 17.4Z" fill="#6060b0"/><path d="M6 14.6 L12.4 17.6 L12 22 L3 17.4Z" fill="#2e2e78"/><path d="M12 2 L21 6.6 V17.4 L12 22 L3 17.4 V6.6 Z" fill="none" stroke="#333" stroke-width="1.2"/></svg>
<svg style="left:21px;top:335px" width="24" height="24" viewBox="0 0 24 24"><g transform="translate(-1.2,-1.2) scale(1.1)"><circle cx="12" cy="12" r="9.2" fill="url(#gPink)" stroke="#222" stroke-width="1.3"/></g></svg>
<svg style="left:21px;top:365px" width="24" height="24" viewBox="0 0 24 24"><path d="M8.6 2.4 L15.8 6.6 L13.4 15.6 L4.6 15 L2 7.6 Z" fill="#f5e27a" stroke="#222" stroke-width="1.2"/><path d="M14.6 8.2 L17 13 L22.4 13.8 L18.4 17.4 L19.4 22.6 L14.6 20 L9.6 22.6 L10.8 17.4 L7 13.8 L12.2 13 Z" fill="#f8e878" stroke="#222" stroke-width="1.2"/></svg>
<svg style="left:21px;top:395px" width="24" height="24" viewBox="0 0 24 24"><g transform="translate(-1.8,-1.8) scale(1.15)"><path d="M12.6 12.8 Q11 11.4 10 13 Q9.4 15.6 12.4 16.2 Q16 16 16.2 12.2 Q15.6 7.8 11.2 7.8 Q6 8.6 6 13.6 Q6.6 19.6 12.8 20 Q20 19.4 20.6 12 Q20 4.4 12 3.4 Q4.6 4 2.6 10.6" fill="none" stroke="#222" stroke-width="1.4"/></g></svg>
<svg style="left:21px;top:425px" width="24" height="24" viewBox="0 0 24 24"><g transform="translate(-1,-1) scale(1.08)"><path d="M3 3.4 Q6.6 1.4 7.4 4 Q7.6 6.6 4.4 8.8 Q9.6 8.8 9 14 Q8.6 19.4 13.6 20 Q18.6 19.6 20 14.6" fill="none" stroke="#222" stroke-width="1.3"/><path d="M16.4 1.6 L21.8 4.6 L15.4 15.6 L10.6 19.4 L10 13.2 Z" fill="#f4a81a" stroke="#7a5200" stroke-width=".8"/><path d="M18 1.6 L21.8 4.6 L20 7.8 L14.6 4.6 Z" fill="#f6d04a"/><path d="M10 13.2 L15.4 15.6 L10.6 19.4 Z" fill="#f6ead0" stroke="#555" stroke-width=".6"/></g></svg>
<svg style="left:21px;top:455px" width="24" height="24" viewBox="0 0 24 24"><path d="M2 2.6 H14 Q8 4.6 9.6 12 Q10.4 19 4 21" fill="none" stroke="#222" stroke-width="1.2"/><path d="M4 21 H11" stroke="#222" stroke-width="1"/><rect x="1.6" y="18.6" width="4.4" height="4.4" fill="#fff" stroke="#111" stroke-width="1"/><rect x="10.4" y="19.6" width="2.8" height="2.8" fill="#fff" stroke="#111" stroke-width=".8"/><path d="M15.4 1.4 L22 4.8 L19.6 11.2 L14 9Z" fill="#5a8ac8" stroke="#1f3f78" stroke-width=".9"/><path d="M14 9 L19.6 11.2 L17.6 14 L13.4 12.4Z" fill="#f0a820" stroke="#7a5200" stroke-width=".7"/><path d="M13.4 12.4 L17.6 14 L12.6 19.4Z" fill="#dfe4ea" stroke="#444" stroke-width=".7"/></svg>
<svg style="left:21px;top:485px" width="24" height="24" viewBox="0 0 24 24"><path d="M2.6 2 Q10.4 4.4 7.6 12 Q5.6 18.6 9.6 21.6 Q4.6 22 3.4 17 Q2.6 13.4 4.6 9.4 Q6 5 2.6 2Z" fill="#111"/><path d="M8 20.6 Q14 22 21.6 17.4 Q15.6 23.4 8.8 22.4Z" fill="#111"/><path d="M15.6 3.4 L22.2 5.6 L20.8 10 L14.4 7.8Z" fill="#3a5a98" stroke="#111" stroke-width=".9"/><path d="M15.6 3.4 L18.6 4.4 L17.6 7.4 L14.8 6.4Z" fill="#d84030"/><path d="M14.4 7.8 L20.8 10 L19 15 L13 20 L11.4 13.6Z" fill="#f4b030" stroke="#111" stroke-width="1"/><path d="M13 20 L16 13" stroke="#111" stroke-width=".9"/><circle cx="16.2" cy="12.4" r="1" fill="#111"/></svg>
<svg style="left:21px;top:515px" width="24" height="24" viewBox="0 0 24 24"><path d="M1.6 21.6 L9 2.6 H14 L21.4 21.6 H16.4 L15 17.4 H7.6 L6.2 21.6Z M8.8 13.8 H13.8 L11.4 6.8Z" fill="#111" fill-rule="evenodd"/><path d="M19.6 1.6 V23 M17.6 1.6 H21.6 M17.6 23 H21.6" stroke="#111" stroke-width="1.1" fill="none"/><path d="M20.6 1.6 V23" stroke="#fff" stroke-width=".5"/></svg>
<svg style="left:21px;top:545px" width="24" height="24" viewBox="0 0 24 24"><path d="M11.6 10.6 L16.6 8.4 Q19.6 9.4 20.6 12.4 L22.4 20.6 Q20 23.6 15.4 22.6 Z" fill="#3f9a3a" stroke="#1f4f1f" stroke-width="1"/><path d="M13.4 12 L16.6 10.6 L19.4 21.4 L16.4 21.6Z" fill="#8ad07a"/><path d="M11 8.4 L15.6 6 L17 8.8 L12.4 11Z" fill="#e4e4e4" stroke="#444" stroke-width=".9"/><rect x="2" y="2.6" width="1.4" height="1.4" fill="#222"/><rect x="5" y="1.6" width="1.4" height="1.4" fill="#222"/><rect x="8" y="3" width="1.4" height="1.4" fill="#222"/><rect x="3.4" y="5.4" width="1.4" height="1.4" fill="#222"/><rect x="6.6" y="5.4" width="1.4" height="1.4" fill="#222"/><rect x="9.4" y="6" width="1.4" height="1.4" fill="#222"/><rect x="1.6" y="8.6" width="1.4" height="1.4" fill="#222"/><rect x="5" y="8.4" width="1.4" height="1.4" fill="#222"/><rect x="7.6" y="9" width="1.4" height="1.4" fill="#222"/><rect x="3.4" y="11.4" width="1.4" height="1.4" fill="#222"/><rect x="6.2" y="12" width="1.4" height="1.4" fill="#222"/></svg>
<svg style="left:21px;top:575px" width="24" height="24" viewBox="0 0 24 24"><g transform="rotate(28 12 12)"><rect x="6.4" y="2.4" width="11.2" height="19.2" fill="url(#gPeach)" stroke="#222" stroke-width="1.2"/></g></svg>
<svg style="left:21px;top:605px" width="24" height="24" viewBox="0 0 24 24"><ellipse cx="10.6" cy="20.6" rx="9" ry="2.6" fill="#9ad09a" stroke="#2a6a3a" stroke-width="1"/><path d="M5.6 8.6 Q3 13 6.4 20 Q8.4 21 8.4 19 Q7 14 8.6 11Z" fill="#9ad09a" stroke="#2a6a3a" stroke-width=".9"/><path d="M6 7.6 L17.6 3 Q21.6 6 21.6 11.4 L11.4 17 Q6.6 13.4 6 7.6Z" fill="#5a8ab8" stroke="#1f2f3f" stroke-width="1.1"/><path d="M8 8.6 L17.4 4.8 Q19 7 19.6 10.6 L12 14.8 Q8.6 12 8 8.6Z" fill="#9cc0dc"/><ellipse cx="12" cy="5.8" rx="6.2" ry="2.2" transform="rotate(-21 12 5.8)" fill="#3f9a8a" stroke="#1f2f3f" stroke-width="1"/><path d="M9.6 2.6 Q8 .6 10 1.4 Q12.6 4 12.6 9.6" fill="none" stroke="#222" stroke-width=".9"/><circle cx="12.6" cy="10" r="1.1" fill="#ddd" stroke="#222" stroke-width=".6"/></svg>
<svg style="left:21px;top:635px" width="24" height="24" viewBox="0 0 24 24"><defs><linearGradient id="gGr" x1="0" y1="0" x2="1" y2="1"><stop offset="0" stop-color="#2f8a4a"/><stop offset="1" stop-color="#d8f0d8"/></linearGradient></defs><rect x="2" y="2" width="20" height="20" fill="url(#gGr)" stroke="#7ac08a" stroke-width=".8"/><path d="M6.6 6.8 L17.6 17.6" stroke="#222" stroke-width="1.2"/><rect x="4.4" y="4.6" width="4.4" height="4.4" fill="#f4f4f4" stroke="#222" stroke-width="1"/><rect x="15.6" y="15.6" width="4.4" height="4.4" rx="1.6" fill="#f4f4f4" stroke="#222" stroke-width="1"/></svg>
<svg style="left:21px;top:665px" width="24" height="24" viewBox="0 0 24 24"><path d="M5 5 Q12 7.6 19.6 5 Q17.4 12 19.6 19.4 Q12 17 5 19.4 Q7.4 12 5 5Z" fill="#4f9a8a" stroke="#1f4f4a" stroke-width="1"/><rect x="2.8" y="2.8" width="4" height="4" fill="#fff" stroke="#000" stroke-width="1.1"/><rect x="17.4" y="2.8" width="4" height="4" fill="#fff" stroke="#000" stroke-width="1.1"/><rect x="2.8" y="17.4" width="4" height="4" fill="#fff" stroke="#000" stroke-width="1.1"/><rect x="17.4" y="17.4" width="4" height="4" fill="#fff" stroke="#000" stroke-width="1.1"/></svg>
<svg style="left:21px;top:695px" width="24" height="24" viewBox="0 0 24 24"><path d="M15.4 5.6 Q17 1.4 20.6 2.4 Q23 4.6 20 8 L21 9.6 L18.6 12 L12.4 6 L14.6 4Z" fill="#111"/><path d="M13.6 8 L17 11.4 L8.4 20 Q6.6 20.6 5.6 19 Z" fill="#cfdcec" stroke="#222" stroke-width="1"/><path d="M5 20.6 Q3.4 23.4 4.6 23.6 Q6.4 23.4 5 20.6Z" fill="#8ab0d8" stroke="#345" stroke-width=".7"/></svg>
<svg style="left:21px;top:725px" width="24" height="24" viewBox="0 0 24 24"><g transform="translate(0,1)"><path d="M13 4.6 H17.6 V16 M9 8 L5.6 16" fill="none" stroke="#222" stroke-width="1.1"/><rect x="8" y="1.6" width="7" height="6" fill="url(#gBlue)" stroke="#223" stroke-width="1.1"/><rect x="10.4" y="10" width="7" height="4.4" fill="#f4c030" stroke="#8a6a10" stroke-width=".6"/><rect x="2.4" y="16" width="7.6" height="6.4" fill="url(#gBlue)" stroke="#223" stroke-width="1.1"/><rect x="15.6" y="16" width="7.6" height="6.4" fill="url(#gBlue)" stroke="#223" stroke-width="1.1"/></g></svg>
<div class="a" style="left:50px;top:119.5px;width:637px;height:16px;background:#efefed"></div>
<div class="a" style="left:50px;top:119.5px;width:17px;height:680px;background:#efefed"></div>
<svg style="left:0;top:0" width="700" height="140"><rect x="68.8" y="133.2" width="594" height="2" fill="#000"/><path d="M72.50 133.4V123.0M81.86 133.4V130.8M91.21 133.4V129.0M100.56 133.4V130.8M109.92 133.4V129.0M119.28 133.4V130.8M128.63 133.4V129.0M137.99 133.4V130.8M147.34 133.4V129.0M156.70 133.4V130.8M166.05 133.4V123.0M175.41 133.4V130.8M184.76 133.4V129.0M194.12 133.4V130.8M203.47 133.4V129.0M212.83 133.4V130.8M222.18 133.4V129.0M231.54 133.4V130.8M240.89 133.4V129.0M250.25 133.4V130.8M259.60 133.4V123.0M268.96 133.4V130.8M278.31 133.4V129.0M287.67 133.4V130.8M297.02 133.4V129.0M306.38 133.4V130.8M315.73 133.4V129.0M325.09 133.4V130.8M334.44 133.4V129.0M343.80 133.4V130.8M353.15 133.4V123.0M362.50 133.4V130.8M371.86 133.4V129.0M381.22 133.4V130.8M390.57 133.4V129.0M399.93 133.4V130.8M409.28 133.4V129.0M418.63 133.4V130.8M427.99 133.4V129.0M437.35 133.4V130.8M446.70 133.4V123.0M456.06 133.4V130.8M465.41 133.4V129.0M474.77 133.4V130.8M484.12 133.4V129.0M493.48 133.4V130.8M502.83 133.4V129.0M512.18 133.4V130.8M521.54 133.4V129.0M530.89 133.4V130.8M540.25 133.4V123.0M549.61 133.4V130.8M558.96 133.4V129.0M568.31 133.4V130.8M577.67 133.4V129.0M587.02 133.4V130.8M596.38 133.4V129.0M605.74 133.4V130.8M615.09 133.4V129.0M624.45 133.4V130.8M633.80 133.4V123.0M643.15 133.4V130.8M652.51 133.4V129.0M661.87 133.4V130.8M662.2 133.4V130.6" stroke="#000" stroke-width="1.3"/><path d="M646.6 130.2 h5 l-2.5 3.6Z" fill="#000"/></svg>
<div class="rl" style="left:74.8px;top:123.4px">1300</div>
<div class="rl" style="left:168.3px;top:123.4px">1350</div>
<div class="rl" style="left:261.9px;top:123.4px">1400</div>
<div class="rl" style="left:355.4px;top:123.4px">1450</div>
<div class="rl" style="left:449.0px;top:123.4px">1500</div>
<div class="rl" style="left:542.6px;top:123.4px">1550</div>
<div class="rl" style="left:636.1px;top:123.4px">1600</div>
<svg style="left:0;top:0" width="70" height="800"><rect x="64.3" y="137.6" width="1.9" height="643.4" fill="#000"/><path d="M64.4 144.12H62.2M64.4 153.47H61.0M64.4 162.83H62.2M64.4 172.18H61.0M64.4 181.54H62.2M64.4 190.89H61.0M64.4 200.25H62.2M64.4 209.60H54.0M64.4 218.96H62.2M64.4 228.31H61.0M64.4 237.67H62.2M64.4 247.02H61.0M64.4 256.38H62.2M64.4 265.73H61.0M64.4 275.09H62.2M64.4 284.44H61.0M64.4 293.80H62.2M64.4 303.15H54.0M64.4 312.51H62.2M64.4 321.86H61.0M64.4 331.22H62.2M64.4 340.57H61.0M64.4 349.93H62.2M64.4 359.28H61.0M64.4 368.64H62.2M64.4 377.99H61.0M64.4 387.35H62.2M64.4 396.70H54.0M64.4 406.06H62.2M64.4 415.41H61.0M64.4 424.77H62.2M64.4 434.12H61.0M64.4 443.48H62.2M64.4 452.83H61.0M64.4 462.19H62.2M64.4 471.54H61.0M64.4 480.90H62.2M64.4 490.25H54.0M64.4 499.61H62.2M64.4 508.96H61.0M64.4 518.32H62.2M64.4 527.67H61.0M64.4 537.02H62.2M64.4 546.38H61.0M64.4 555.73H62.2M64.4 565.09H61.0M64.4 574.44H62.2M64.4 583.80H54.0M64.4 593.15H62.2M64.4 602.51H61.0M64.4 611.87H62.2M64.4 621.22H61.0M64.4 630.58H62.2M64.4 639.93H61.0M64.4 649.28H62.2M64.4 658.64H61.0M64.4 668.00H62.2M64.4 677.35H54.0M64.4 686.70H62.2M64.4 696.06H61.0M64.4 705.41H62.2M64.4 714.77H61.0M64.4 724.12H62.2M64.4 733.48H61.0M64.4 742.84H62.2M64.4 752.19H61.0M64.4 761.55H62.2M64.4 770.90H54.0M64.4 780.25H62.2" stroke="#000" stroke-width="1.3"/><path d="M61 446.4 v5.4 l3.6 -2.7Z" fill="#000"/></svg>
<div class="a" style="left:50px;top:136px;width:14px;height:646.6px;overflow:hidden">
<div class="rl" style="left:4.4px;top:74.9px">3</div>
<div class="rl" style="left:4.4px;top:82.9px">5</div>
<div class="rl" style="left:4.4px;top:90.9px">0</div>
<div class="rl" style="left:4.4px;top:168.5px">3</div>
<div class="rl" style="left:4.4px;top:176.5px">0</div>
<div class="rl" style="left:4.4px;top:184.5px">0</div>
<div class="rl" style="left:4.4px;top:262.0px">2</div>
<div class="rl" style="left:4.4px;top:270.0px">5</div>
<div class="rl" style="left:4.4px;top:278.0px">0</div>
<div class="rl" style="left:4.4px;top:355.6px">2</div>
<div class="rl" style="left:4.4px;top:363.6px">0</div>
<div class="rl" style="left:4.4px;top:371.6px">0</div>
<div class="rl" style="left:4.4px;top:449.1px">1</div>
<div class="rl" style="left:4.4px;top:457.1px">5</div>
<div class="rl" style="left:4.4px;top:465.1px">0</div>
<div class="rl" style="left:4.4px;top:542.6px">1</div>
<div class="rl" style="left:4.4px;top:550.6px">0</div>
<div class="rl" style="left:4.4px;top:558.6px">0</div>
<div class="rl" style="left:4.4px;top:636.2px">5</div>
<div class="rl" style="left:4.4px;top:644.2px">0</div>
</div>
<div class="rl" style="left:54.4px;top:124.6px;height:7px;overflow:hidden"><span style="position:relative;top:-3.4px">0</span></div>
<svg style="left:54px;top:123px" width="8.4" height="9" viewBox="0 0 9 10"><path d="M2.2 4.6 V3 Q2.2 1 4.5 1 Q6.8 1 6.8 3 V4.6" fill="none" stroke="#8a6a20" stroke-width="1.3"/><rect x=".8" y="4.2" width="7.4" height="5.2" rx=".8" fill="#f0b830" stroke="#9a6a10" stroke-width=".8"/><rect x="2" y="6.6" width="5" height="1.6" fill="#fbe6a0"/></svg>
<svg style="left:669px;top:122px" width="12" height="12" viewBox="0 0 12 12"><circle cx="4.6" cy="4.6" r="3.6" fill="#f4f4f4" stroke="#8a8a8a" stroke-width="1.1"/><path d="M7.4 7.4 L10.6 10.6" stroke="#7a7a7a" stroke-width="1.8" stroke-linecap="round"/><path d="M3.6 3.4V5.8M5 3.4V5.8" stroke="#aaa" stroke-width=".7"/></svg>
<div class="a" style="left:66.2px;top:135.2px;width:599.6px;height:648.5px;background:#fcfcfa"></div>
<svg style="left:0;top:0" width="700" height="800"><circle cx="335" cy="278.7" r="54.6" fill="#000"/><rect x="313" y="300" width="44.6" height="176.8" rx="22.3" ry="22.3" fill="#000"/><rect x="108.8" y="402" width="79" height="22" rx="10.5" ry="10.5" fill="#000"/><rect x="188" y="402" width="79.1" height="22" rx="10.5" ry="10.5" fill="#000"/><rect x="416" y="402" width="78.5" height="22" rx="10.5" ry="10.5" fill="#000"/><rect x="494.7" y="402" width="79.5" height="22" rx="10.5" ry="10.5" fill="#000"/><rect x="257.2" y="547.1" width="22" height="78.1" rx="10.8" ry="10.8" fill="#000"/><rect x="257.2" y="625.3" width="22" height="79.6" rx="10.8" ry="10.8" fill="#000"/><rect x="384.1" y="544.9" width="21.5" height="78.6" rx="10.6" ry="10.6" fill="#000"/><rect x="384.1" y="623.6" width="21.5" height="79.1" rx="10.6" ry="10.6" fill="#000"/><rect x="280.5" y="224.5" width="109" height="109" fill="none" stroke="#fff" stroke-width="1"/><rect x="280.5" y="224.5" width="109" height="109" fill="none" stroke="#3a3a3a" stroke-width="1" stroke-dasharray="2.5 2.6"/><rect x="312.5" y="311.5" width="46" height="166" fill="none" stroke="#fff" stroke-width="1"/><rect x="312.5" y="311.5" width="46" height="166" fill="none" stroke="#3a3a3a" stroke-width="1" stroke-dasharray="2.5 2.6"/><path d="M-7.8 0 L-3.5 -4.3 L-3.5 -1.8 L3.5 -1.8 L3.5 -4.3 L7.8 0 L3.5 4.3 L3.5 1.8 L-3.5 1.8 L-3.5 4.3 Z" transform="translate(273.3,217.3) rotate(45)" fill="#000"/><path d="M-6.35 0 L-1.65 -4.8 L-1.65 -1.45 L1.65 -1.45 L1.65 -4.8 L6.35 0 L1.65 4.8 L1.65 1.45 L-1.65 1.45 L-1.65 4.8 Z" transform="translate(335.3,217) rotate(90)" fill="#000"/><path d="M-7.8 0 L-3.5 -4.3 L-3.5 -1.8 L3.5 -1.8 L3.5 -4.3 L7.8 0 L3.5 4.3 L3.5 1.8 L-3.5 1.8 L-3.5 4.3 Z" transform="translate(395.8,217.3) rotate(-45)" fill="#000"/><path d="M-6.35 0 L-1.65 -4.8 L-1.65 -1.45 L1.65 -1.45 L1.65 -4.8 L6.35 0 L1.65 4.8 L1.65 1.45 L-1.65 1.45 L-1.65 4.8 Z" transform="translate(273.3,350.3) rotate(0)" fill="#000"/><path d="M-6.35 0 L-1.65 -4.8 L-1.65 -1.45 L1.65 -1.45 L1.65 -4.8 L6.35 0 L1.65 4.8 L1.65 1.45 L-1.65 1.45 L-1.65 4.8 Z" transform="translate(395.8,350.3) rotate(0)" fill="#000"/><path d="M-7.8 0 L-3.5 -4.3 L-3.5 -1.8 L3.5 -1.8 L3.5 -4.3 L7.8 0 L3.5 4.3 L3.5 1.8 L-3.5 1.8 L-3.5 4.3 Z" transform="translate(273.3,483.3) rotate(-45)" fill="#000"/><path d="M-6.35 0 L-1.65 -4.8 L-1.65 -1.45 L1.65 -1.45 L1.65 -4.8 L6.35 0 L1.65 4.8 L1.65 1.45 L-1.65 1.45 L-1.65 4.8 Z" transform="translate(335.3,483.6) rotate(90)" fill="#000"/><path d="M-7.8 0 L-3.5 -4.3 L-3.5 -1.8 L3.5 -1.8 L3.5 -4.3 L7.8 0 L3.5 4.3 L3.5 1.8 L-3.5 1.8 L-3.5 4.3 Z" transform="translate(395.8,483.3) rotate(45)" fill="#000"/></svg>
<div class="a" style="left:666px;top:136px;width:15px;height:648px;background:linear-gradient(90deg,#e3e3e3,#ededed 50%,#e9e9e9)"></div>
<div class="a" style="left:666px;top:306px;width:15px;height:218.5px;box-sizing:border-box;border:1px solid #979797;border-radius:2px;background:linear-gradient(90deg,#f2f2f2 0,#e6e6e6 45%,#d4d4d4 55%,#cfcfcf 100%)"></div>
<svg style="left:669px;top:410px" width="9" height="10"><path d="M0 1.5H8M0 3.7H8M0 5.9H8M0 8.1H8" stroke="#555" stroke-width="1"/><path d="M0 2.5H8M0 4.7H8M0 6.9H8" stroke="#fff" stroke-width=".8"/></svg>
<svg style="left:669px;top:140px" width="10" height="8"><path d="M1 5.6 L5 1.6 L9 5.6Z" fill="#5a5a5a"/></svg>
<svg style="left:669px;top:771px" width="10" height="8"><path d="M1 2 L5 6 L9 2Z" fill="#5a5a5a"/></svg>
<div class="a" style="left:67px;top:784px;width:599px;height:15px;background:linear-gradient(#e3e3e3,#ededed 50%,#e9e9e9)"></div>
<div class="a" style="left:553.5px;top:784px;width:93px;height:14.5px;box-sizing:border-box;border:1px solid #979797;border-radius:2px;background:linear-gradient(#f2f2f2 0,#e6e6e6 45%,#d4d4d4 55%,#cfcfcf 100%)"></div>
<svg style="left:595.5px;top:787px" width="10" height="9"><path d="M1.5 0V8M3.9 0V8M6.3 0V8" stroke="#444" stroke-width="1.1"/><path d="M2.6 0V8M5 0V8M7.4 0V8" stroke="#fff" stroke-width=".7"/></svg>
<svg style="left:72px;top:786px" width="8" height="10"><path d="M5.6 1 L1.6 5 L5.6 9Z" fill="#5a5a5a"/></svg>
<svg style="left:653.5px;top:786px" width="8" height="10"><path d="M2.4 1 L6.4 5 L2.4 9Z" fill="#6a6a6a"/></svg>
<svg style="left:668.5px;top:786.5px" width="10" height="10" viewBox="0 0 10 10"><path d="M.6 .8 L9.4 5.8 L2.4 9.6Z" fill="#8a8" stroke="#667" stroke-width=".5"/><path d="M.6 .8 L4 3 L2 6Z" fill="#3a8a3a"/><path d="M4 3 L9.4 5.8 L5 7Z" fill="#a33"/><path d="M2 6 L5 7 L2.4 9.6Z" fill="#35a"/></svg>
<div class="a" style="left:687px;top:120.6px;width:303.5px;height:679px;background:#ececec"></div>
<div class="a" style="left:687.2px;top:120.6px;width:2px;height:679px;background:#0a0a0a"></div>
<div class="a" style="left:689.2px;top:122px;width:301px;height:473.6px;background:#efefef"></div>
<div class="a" style="left:689.2px;top:595.6px;width:301px;height:1.4px;background:#fbfbfb"></div>
<div class="a" style="left:689.2px;top:143.8px;width:301px;height:1px;background:#9a9a9a"></div>
<div class="a" style="left:689.2px;top:144.8px;width:301px;height:1px;background:#f8f8f8"></div>
<svg style="left:690px;top:126.5px" width="13" height="13" viewBox="0 0 13 13"><path d="M1 0V13" stroke="#c42a20" stroke-width="1.6"/><rect x="2.5" y=".8" width="5" height="3" fill="#e4e8ee" stroke="#778" stroke-width=".9"/><rect x="2.5" y="5" width="9.6" height="3" fill="#dfe6ee" stroke="#778" stroke-width=".9"/><rect x="2.5" y="9.2" width="7.6" height="3" fill="#dfe6ee" stroke="#778" stroke-width=".9"/></svg>
<div class="t" style="left:703.8px;top:126.3px;font-size:13px;letter-spacing:-0.98px;">整列と配置</div>
<div class="t" style="left:764.1px;top:126.3px;font-size:13px;letter-spacing:-0.38px;">(A)</div>
<div class="t" style="left:786.3px;top:126.3px;font-size:13px;letter-spacing:0.43px;">(Shift+Ctrl+A)</div>
<div class="a" style="left:951px;top:127.6px;width:11px;height:11px;box-sizing:border-box;border:1px solid #8a8a8a;border-radius:2px;background:#f4f4f4"></div>
<svg style="left:951px;top:127.6px" width="11" height="11" viewBox="0 0 11 11"><path d="M7.4 2.6 L3.2 5.5 L7.4 8.4Z" fill="#555"/></svg>
<div class="a" style="left:973.5px;top:127.6px;width:11px;height:11px;box-sizing:border-box;border:1px solid #8a8a8a;border-radius:2px;background:#f4f4f4"></div>
<svg style="left:973.5px;top:127.6px" width="11" height="11" viewBox="0 0 11 11"><path d="M2.8 2.8 L8.2 8.2 M8.2 2.8 L2.8 8.2" stroke="#555" stroke-width="2"/></svg>
<div class="t b" style="left:699.6px;top:151.5px;font-size:12px;letter-spacing:-0.71px;">整列</div>
<div class="t b" style="left:700px;top:293px;font-size:12px;letter-spacing:-0.76px;">配置</div>
<div class="t b" style="left:700px;top:389px;font-size:12px;letter-spacing:-0.44px;">再配置</div>
<div class="t b" style="left:700px;top:451.5px;font-size:12px;letter-spacing:-0.24px;">重なりを除去</div>
<div class="t b" style="left:700px;top:513px;font-size:12px;letter-spacing:-0.44px;">ノード</div>
<div class="t" style="left:805.2px;top:176.5px;font-size:12px;letter-spacing:-0.11px;">基準:</div>
<div class="inp" style="left:838px;top:171.4px;width:144.5px;height:23px;border-color:#9a9a9a #b4b4b4 #c4c4c4 #9a9a9a"></div><div class="a" style="left:962px;top:172.4px;width:19.5px;height:21px;box-sizing:border-box;border:1px solid #707070;border-radius:2px;background:linear-gradient(#f2f2f2 0,#ebebeb 45%,#dddddd 50%,#cfcfcf 100%)"></div><svg style="left:966.7px;top:180.5px" width="10" height="6"><path d="M1 .6 H9 L5 5.4Z" fill="#000"/></svg>
<div class="t" style="left:841.5px;top:176.5px;font-size:12px;letter-spacing:-0.33px;">選択範囲</div>
<div class="t" style="left:723px;top:199.3px;font-size:12px;letter-spacing:-0.04px;">選択オブジェクトをグループとして扱う</div>
<div class="t" style="left:940px;top:199.3px;font-size:12px;letter-spacing:0.53px;">(<u>T</u>):</div>
<div class="a" style="left:966px;top:199px;width:13px;height:13px;box-sizing:border-box;border:1px solid #8e8f8f;background:linear-gradient(135deg,#d6d6d6,#f6f6f6 60%,#fff)"></div>
<div class="a" style="left:847.6px;top:217.4px;width:32.6px;height:31.2px;box-sizing:border-box;border:1px solid #8c8c8c;border-radius:3px;background:linear-gradient(#f4f4f4,#e2e2e2)"></div>
<div class="a" style="left:850px;top:219.8px;width:27.8px;height:26.4px;box-sizing:border-box;border:1px dotted #222"></div>
<svg style="left:784px;top:220.4px" width="24" height="24" viewBox="0 0 24 24"><rect x="0.5" y="6" width="18" height="5" fill="url(#gBlueV)" stroke="#3a4652" stroke-width="1"/><rect x="10.5" y="11.5" width="8" height="5" fill="url(#gBlueV)" stroke="#3a4652" stroke-width="1"/><rect x="5.5" y="17.5" width="13" height="5" fill="url(#gBlueV)" stroke="#3a4652" stroke-width="1"/><path d="M19 1V24" stroke="#d42416" stroke-width="1.25" fill="none"/><rect x="19.9" y="0.4" width="4.2" height="4.2" fill="#f8c838" stroke="#b08a20" stroke-width=".8"/></svg>
<svg style="left:818px;top:220.4px" width="24" height="24" viewBox="0 0 24 24"><path d="M1 1V24" stroke="#d42416" stroke-width="1.25" fill="none"/><rect x="2" y="2" width="20" height="5.5" fill="url(#gBlueV)" stroke="#3a4652" stroke-width="1"/><rect x="2" y="8" width="7.5" height="4.5" fill="url(#gBlueV)" stroke="#3a4652" stroke-width="1"/><rect x="2" y="13" width="11.5" height="5" fill="url(#gBlueV)" stroke="#3a4652" stroke-width="1"/><path d="M3 21H16" stroke="#000" stroke-width="1" fill="none"/><path d="M1.8 21 l3.4 -2.4 v4.8Z" fill="#000"/></svg>
<svg style="left:852px;top:220.4px" width="24" height="24" viewBox="0 0 24 24"><rect x="2.5" y="2.5" width="19" height="5" fill="url(#gBlueV)" stroke="#3a4652" stroke-width="1"/><rect x="7.5" y="8" width="9" height="5" fill="url(#gBlueV)" stroke="#3a4652" stroke-width="1"/><rect x="5.5" y="13.5" width="13" height="5" fill="url(#gBlueV)" stroke="#3a4652" stroke-width="1"/><path d="M12 0V24" stroke="#d42416" stroke-width="1.25" fill="none"/><path d="M4 21H10M14 21H20" stroke="#000" stroke-width="1" fill="none"/><path d="M11.4 21 l-3.4 -2.4 v4.8Z" fill="#000"/><path d="M12.6 21 l3.4 -2.4 v4.8Z" fill="#000"/></svg>
<svg style="left:886px;top:220.4px" width="24" height="24" viewBox="0 0 24 24"><rect x="1.5" y="2.5" width="19" height="4.5" fill="url(#gBlueV)" stroke="#3a4652" stroke-width="1"/><rect x="13.5" y="8" width="7" height="4.5" fill="url(#gBlueV)" stroke="#3a4652" stroke-width="1"/><rect x="10.5" y="13.5" width="10" height="5" fill="url(#gBlueV)" stroke="#3a4652" stroke-width="1"/><path d="M21 0V24" stroke="#d42416" stroke-width="1.25" fill="none"/><path d="M8 21.5H20" stroke="#000" stroke-width="1" fill="none"/><path d="M22 21.5 l-3.4 -2.4 v4.8Z" fill="#000"/></svg>
<svg style="left:920px;top:220.4px" width="24" height="24" viewBox="0 0 24 24"><rect x="5.5" y="4.5" width="18" height="5" fill="url(#gBlueV)" stroke="#3a4652" stroke-width="1"/><rect x="5.5" y="10.5" width="8" height="4.5" fill="url(#gBlueV)" stroke="#3a4652" stroke-width="1"/><rect x="5.5" y="15.5" width="13" height="4.5" fill="url(#gBlueV)" stroke="#3a4652" stroke-width="1"/><path d="M5 1V24" stroke="#d42416" stroke-width="1.25" fill="none"/><rect x="0.4" y="0.4" width="4.2" height="4.2" fill="#f8c838" stroke="#b08a20" stroke-width=".8"/></svg>
<svg style="left:954px;top:220.4px" width="24" height="24" viewBox="0 0 24 24"><path d="M6.3 .4V24" stroke="#d42416" stroke-width="1.25" fill="none"/><text x="7.6" y="8" style="font-family:&quot;Liberation Sans&quot;,sans-serif" font-weight="bold" font-size="13.5" fill="#1a2436">a</text><text x="6.6" y="18.6" style="font-family:&quot;Liberation Serif&quot;,serif" font-style="italic" font-weight="bold" font-size="19" fill="#111">y</text></svg>
<svg style="left:784px;top:254.6px" width="24" height="24" viewBox="0 0 24 24"><rect x="1.5" y="8.5" width="4.5" height="10" fill="url(#gBlueV)" stroke="#3a4652" stroke-width="1"/><rect x="6.5" y="13.5" width="5" height="5" fill="url(#gBlueV)" stroke="#3a4652" stroke-width="1"/><rect x="12" y="3.5" width="5.5" height="15" fill="url(#gBlueV)" stroke="#3a4652" stroke-width="1"/><path d="M0 19H24" stroke="#d42416" stroke-width="1.25" fill="none"/><rect x="19.4" y="19.4" width="4.2" height="4.2" fill="#f8c838" stroke="#b08a20" stroke-width=".8"/></svg>
<svg style="left:818px;top:254.6px" width="24" height="24" viewBox="0 0 24 24"><path d="M0 1H24" stroke="#d42416" stroke-width="1.25" fill="none"/><rect x="7.5" y="2" width="4.5" height="10.5" fill="url(#gBlueV)" stroke="#3a4652" stroke-width="1"/><rect x="12.5" y="2" width="4" height="5.5" fill="url(#gBlueV)" stroke="#3a4652" stroke-width="1"/><rect x="17" y="2" width="5" height="21" fill="url(#gBlueV)" stroke="#3a4652" stroke-width="1"/><path d="M3.4 4V17" stroke="#000" stroke-width="1" fill="none"/><path d="M3.4 2.2 l-2.4 3.4 h4.8Z" fill="#000"/></svg>
<svg style="left:852px;top:254.6px" width="24" height="24" viewBox="0 0 24 24"><rect x="6.5" y="6.5" width="4.5" height="11" fill="url(#gBlueV)" stroke="#3a4652" stroke-width="1"/><rect x="11.5" y="8.5" width="4.5" height="7" fill="url(#gBlueV)" stroke="#3a4652" stroke-width="1"/><rect x="16.5" y="1.5" width="5" height="21" fill="url(#gBlueV)" stroke="#3a4652" stroke-width="1"/><path d="M0 12H24" stroke="#d42416" stroke-width="1.25" fill="none"/><path d="M3.4 2V8M3.4 16V22" stroke="#000" stroke-width="1" fill="none"/><path d="M3.4 11.4 l-2.4 -3.4 h4.8Z" fill="#000"/><path d="M3.4 12.6 l-2.4 3.4 h4.8Z" fill="#000"/></svg>
<svg style="left:886px;top:254.6px" width="24" height="24" viewBox="0 0 24 24"><rect x="6.5" y="4.5" width="5.5" height="18" fill="url(#gBlueV)" stroke="#3a4652" stroke-width="1"/><rect x="12.5" y="12.5" width="4.5" height="10" fill="url(#gBlueV)" stroke="#3a4652" stroke-width="1"/><rect x="17.5" y="8.5" width="5" height="14" fill="url(#gBlueV)" stroke="#3a4652" stroke-width="1"/><path d="M0 23H24" stroke="#d42416" stroke-width="1.25" fill="none"/><path d="M2.6 3V20" stroke="#000" stroke-width="1" fill="none"/><path d="M2.6 22.4 l-2.4 -3.4 h4.8Z" fill="#000"/></svg>
<svg style="left:920px;top:254.6px" width="24" height="24" viewBox="0 0 24 24"><rect x="7.5" y="0.5" width="4.5" height="10" fill="url(#gBlueV)" stroke="#3a4652" stroke-width="1"/><rect x="12.5" y="0.5" width="4" height="5" fill="url(#gBlueV)" stroke="#3a4652" stroke-width="1"/><rect x="17" y="0.5" width="5" height="20" fill="url(#gBlueV)" stroke="#3a4652" stroke-width="1"/></svg>
<svg style="left:954px;top:254.6px" width="24" height="24" viewBox="0 0 24 24"><path d="M0 14.7H24" stroke="#d42416" stroke-width="1.25" fill="none"/><text x="0" y="14.6" style="font-family:&quot;Liberation Serif&quot;,serif" font-style="italic" font-weight="bold" font-size="19" fill="#111">y</text><text x="14.6" y="14.4" style="font-family:&quot;Liberation Sans&quot;,sans-serif" font-weight="bold" font-size="13.5" fill="#1a2436">a</text></svg>
<svg style="left:818px;top:316.8px" width="24" height="24" viewBox="0 0 24 24"><rect x="1" y="6.5" width="4.5" height="16" fill="url(#gBlueV)" stroke="#3a4652" stroke-width="1"/><rect x="10.3" y="8.5" width="2.7" height="8" fill="url(#gBlueV)" stroke="#3a4652" stroke-width="1"/><rect x="19.5" y="7.5" width="4" height="7" fill="url(#gBlueV)" stroke="#3a4652" stroke-width="1"/><path d="M.6 0V7M9.9 0V9M19.1 0V8" stroke="#d42416" stroke-width="1.25" fill="none"/><path d="M0.6 2H9.9" stroke="#000" stroke-width="1" fill="none"/><path d="M1 2 l2.4 -1.8 v3.6Z" fill="#000"/><path d="M9.5 2 l-2.4 -1.8 v3.6Z" fill="#000"/><path d="M9.9 2H19.1" stroke="#000" stroke-width="1" fill="none"/><path d="M10.3 2 l2.4 -1.8 v3.6Z" fill="#000"/><path d="M18.7 2 l-2.4 -1.8 v3.6Z" fill="#000"/></svg>
<svg style="left:852px;top:316.8px" width="24" height="24" viewBox="0 0 24 24"><rect x="1.5" y="7.5" width="5" height="8" fill="url(#gBlueV)" stroke="#3a4652" stroke-width="1"/><rect x="10.5" y="6.5" width="5" height="16" fill="url(#gBlueV)" stroke="#3a4652" stroke-width="1"/><rect x="20" y="9.5" width="4" height="11" fill="url(#gBlueV)" stroke="#3a4652" stroke-width="1"/><path d="M4 0V12M13 0V13M22 0V14" stroke="#d42416" stroke-width="1.25" fill="none"/><path d="M4 2H13" stroke="#000" stroke-width="1" fill="none"/><path d="M4.4 2 l2.4 -1.8 v3.6Z" fill="#000"/><path d="M12.6 2 l-2.4 -1.8 v3.6Z" fill="#000"/><path d="M13 2H22" stroke="#000" stroke-width="1" fill="none"/><path d="M13.4 2 l2.4 -1.8 v3.6Z" fill="#000"/><path d="M21.6 2 l-2.4 -1.8 v3.6Z" fill="#000"/></svg>
<svg style="left:886px;top:316.8px" width="24" height="24" viewBox="0 0 24 24"><rect x="1" y="6.5" width="4.5" height="16" fill="url(#gBlueV)" stroke="#3a4652" stroke-width="1"/><rect x="11.5" y="8.5" width="3" height="8" fill="url(#gBlueV)" stroke="#3a4652" stroke-width="1"/><rect x="19" y="7.5" width="4" height="7" fill="url(#gBlueV)" stroke="#3a4652" stroke-width="1"/><path d="M5.9 0V8M14.9 0V9M23.4 0V8" stroke="#d42416" stroke-width="1.25" fill="none"/><path d="M5.9 2H14.9" stroke="#000" stroke-width="1" fill="none"/><path d="M6.3 2 l2.4 -1.8 v3.6Z" fill="#000"/><path d="M14.5 2 l-2.4 -1.8 v3.6Z" fill="#000"/><path d="M14.9 2H23.4" stroke="#000" stroke-width="1" fill="none"/><path d="M15.3 2 l2.4 -1.8 v3.6Z" fill="#000"/><path d="M23 2 l-2.4 -1.8 v3.6Z" fill="#000"/></svg>
<svg style="left:920px;top:316.8px" width="24" height="24" viewBox="0 0 24 24"><rect x="1" y="6.5" width="2.3" height="14" fill="url(#gBlueV)" stroke="#3a4652" stroke-width="1"/><rect x="10" y="6.5" width="3.5" height="10" fill="url(#gBlueV)" stroke="#3a4652" stroke-width="1"/><rect x="21" y="6.5" width="2.5" height="16" fill="url(#gBlueV)" stroke="#3a4652" stroke-width="1"/><path d="M3.7 0V20M9.6 0V16M13.9 0V16M20.6 0V22" stroke="#d42416" stroke-width="1.25" fill="none"/><path d="M3.7 2H9.6" stroke="#000" stroke-width="1" fill="none"/><path d="M4.1 2 l2.4 -1.8 v3.6Z" fill="#000"/><path d="M9.2 2 l-2.4 -1.8 v3.6Z" fill="#000"/><path d="M13.9 2H20.6" stroke="#000" stroke-width="1" fill="none"/><path d="M14.3 2 l2.4 -1.8 v3.6Z" fill="#000"/><path d="M20.2 2 l-2.4 -1.8 v3.6Z" fill="#000"/></svg>
<svg style="left:954px;top:316.8px" width="24" height="24" viewBox="0 0 24 24"><path d="M.6 0V24M14.6 0V24" stroke="#d42416" stroke-width="1.25" fill="none"/><path d="M0.6 2.4H14.6" stroke="#000" stroke-width="1" fill="none"/><path d="M1 2.4 l2.4 -1.8 v3.6Z" fill="#000"/><path d="M14.2 2.4 l-2.4 -1.8 v3.6Z" fill="#000"/><text x="1.6" y="16.6" style="font-family:&quot;Liberation Sans&quot;,sans-serif" font-weight="bold" font-size="13.5" fill="#1f2f4f">a</text><text x="9" y="16.6" style="font-family:&quot;Liberation Serif&quot;,serif" font-style="italic" font-weight="bold" font-size="19" fill="#111">y</text></svg>
<svg style="left:818px;top:350.6px" width="24" height="24" viewBox="0 0 24 24"><rect x="8.5" y="1.5" width="7" height="3.6" fill="url(#gBlueV)" stroke="#3a4652" stroke-width="1"/><rect x="9.5" y="10.5" width="8" height="2.6" fill="url(#gBlueV)" stroke="#3a4652" stroke-width="1"/><rect x="7.5" y="19.5" width="16" height="4" fill="url(#gBlueV)" stroke="#3a4652" stroke-width="1"/><path d="M0 1.1H9M0 10.1H10M0 19.1H8" stroke="#d42416" stroke-width="1.25" fill="none"/><path d="M2 1.1V10.1" stroke="#000" stroke-width="1" fill="none"/><path d="M2 1.5 l-1.8 2.4 h3.6Z" fill="#000"/><path d="M2 9.7 l-1.8 -2.4 h3.6Z" fill="#000"/><path d="M2 10.1V19.1" stroke="#000" stroke-width="1" fill="none"/><path d="M2 10.5 l-1.8 2.4 h3.6Z" fill="#000"/><path d="M2 18.7 l-1.8 -2.4 h3.6Z" fill="#000"/></svg>
<svg style="left:852px;top:350.6px" width="24" height="24" viewBox="0 0 24 24"><rect x="10.5" y="1.5" width="11" height="4" fill="url(#gBlueV)" stroke="#3a4652" stroke-width="1"/><rect x="6.5" y="10" width="16.5" height="5" fill="url(#gBlueV)" stroke="#3a4652" stroke-width="1"/><rect x="8.5" y="19" width="8" height="4.5" fill="url(#gBlueV)" stroke="#3a4652" stroke-width="1"/><path d="M0 3.5H14M0 12.5H14M0 21.3H13" stroke="#d42416" stroke-width="1.25" fill="none"/><path d="M2 3.5V12.5" stroke="#000" stroke-width="1" fill="none"/><path d="M2 3.9 l-1.8 2.4 h3.6Z" fill="#000"/><path d="M2 12.1 l-1.8 -2.4 h3.6Z" fill="#000"/><path d="M2 12.5V21.3" stroke="#000" stroke-width="1" fill="none"/><path d="M2 12.9 l-1.8 2.4 h3.6Z" fill="#000"/><path d="M2 20.9 l-1.8 -2.4 h3.6Z" fill="#000"/></svg>
<svg style="left:886px;top:350.6px" width="24" height="24" viewBox="0 0 24 24"><rect x="8.5" y="1.5" width="7" height="3.6" fill="url(#gBlueV)" stroke="#3a4652" stroke-width="1"/><rect x="9.5" y="10.5" width="8" height="2.6" fill="url(#gBlueV)" stroke="#3a4652" stroke-width="1"/><rect x="7.5" y="19.5" width="16" height="4" fill="url(#gBlueV)" stroke="#3a4652" stroke-width="1"/><path d="M0 5.5H9M0 13.5H10M0 23.9H8" stroke="#d42416" stroke-width="1.25" fill="none"/><path d="M2 5.5V13.5" stroke="#000" stroke-width="1" fill="none"/><path d="M2 5.9 l-1.8 2.4 h3.6Z" fill="#000"/><path d="M2 13.1 l-1.8 -2.4 h3.6Z" fill="#000"/><path d="M2 13.5V23.9" stroke="#000" stroke-width="1" fill="none"/><path d="M2 13.9 l-1.8 2.4 h3.6Z" fill="#000"/><path d="M2 23.5 l-1.8 -2.4 h3.6Z" fill="#000"/></svg>
<svg style="left:920px;top:350.6px" width="24" height="24" viewBox="0 0 24 24"><rect x="7.5" y="1" width="16" height="2.5" fill="url(#gBlueV)" stroke="#3a4652" stroke-width="1"/><rect x="9.5" y="10.5" width="8" height="3" fill="url(#gBlueV)" stroke="#3a4652" stroke-width="1"/><rect x="7.5" y="21" width="14" height="2.5" fill="url(#gBlueV)" stroke="#3a4652" stroke-width="1"/><path d="M0 3.9H20M0 10.1H17M0 13.9H17M0 20.6H20" stroke="#d42416" stroke-width="1.25" fill="none"/><path d="M2 3.9V10.1" stroke="#000" stroke-width="1" fill="none"/><path d="M2 4.3 l-1.8 2.4 h3.6Z" fill="#000"/><path d="M2 9.7 l-1.8 -2.4 h3.6Z" fill="#000"/><path d="M2 13.9V20.6" stroke="#000" stroke-width="1" fill="none"/><path d="M2 14.3 l-1.8 2.4 h3.6Z" fill="#000"/><path d="M2 20.2 l-1.8 -2.4 h3.6Z" fill="#000"/></svg>
<svg style="left:954px;top:350.6px" width="24" height="24" viewBox="0 0 24 24"><path d="M0 9.7H24M0 23.2H24" stroke="#d42416" stroke-width="1.25" fill="none"/><path d="M2.6 9.7V23.2" stroke="#000" stroke-width="1" fill="none"/><path d="M2.6 10.1 l-1.8 2.4 h3.6Z" fill="#000"/><path d="M2.6 22.8 l-1.8 -2.4 h3.6Z" fill="#000"/><text x="8.6" y="9.4" style="font-family:&quot;Liberation Serif&quot;,serif" font-style="italic" font-weight="bold" font-size="19" fill="#111">y</text><text x="12" y="22.9" style="font-family:&quot;Liberation Sans&quot;,sans-serif" font-weight="bold" font-size="13.5" fill="#1f2f4f">a</text></svg>
<svg style="left:784px;top:413px" width="24" height="24" viewBox="0 0 24 24"><path d="M2.6 6.6 L8 2.6 L12.4 7.6 L9.6 15 L3.4 14 Z M12.4 7.6 L19 9.4 L23 4 M19 9.4 L22 15" fill="none" stroke="#a9b3ea" stroke-width="1.3"/><circle cx="2.6" cy="6.6" r="1.7" fill="#a9b3ea"/><circle cx="8" cy="2.6" r="1.7" fill="#a9b3ea"/><circle cx="12.4" cy="7.6" r="1.7" fill="#a9b3ea"/><circle cx="9.6" cy="15" r="1.7" fill="#a9b3ea"/><circle cx="3.4" cy="14" r="1.7" fill="#a9b3ea"/><circle cx="19" cy="9.4" r="1.7" fill="#a9b3ea"/><circle cx="23" cy="4" r="1.7" fill="#a9b3ea"/><circle cx="22" cy="15" r="1.7" fill="#a9b3ea"/></svg>
<svg style="left:819px;top:413px" width="24" height="24" viewBox="0 0 24 24"><path d="M11 4 Q18 3 18 9" stroke="#000" stroke-width="1.3" fill="none"/><path d="M18 11.4 l-2.4 -3.4 h4.8Z" fill="#000"/><path d="M15 17 Q6 18 6 12.4" stroke="#000" stroke-width="1.3" fill="none"/><path d="M6 9.8 l-2.4 3.4 h4.8Z" fill="#000"/><rect x="0.5" y="0.5" width="10" height="10" fill="url(#gBlue)" stroke="#2a3440" stroke-width="1.1"/><rect x="12.5" y="10.5" width="10.5" height="10.5" fill="url(#gBlue)" stroke="#2a3440" stroke-width="1.1"/></svg>
<svg style="left:852px;top:413px" width="24" height="24" viewBox="0 0 24 24"><path d="M10 3.4 Q18 2.6 18.6 6" stroke="#000" stroke-width="1.2" fill="none"/><path d="M18.6 8 l-2.4 -3.4 h4.8Z" fill="#000"/><path d="M15 13.6 Q6 14 6 10" stroke="#000" stroke-width="1.2" fill="none"/><path d="M6 8 l-2.4 3.4 h4.8Z" fill="#000"/><rect x="1.5" y="0.5" width="8.4" height="8.4" fill="url(#gBlue)" stroke="#2a3440" stroke-width="1.1"/><rect x="14.5" y="6.9" width="8.8" height="8.8" fill="url(#gBlue)" stroke="#2a3440" stroke-width="1.1"/><path d="M1 15.5H12M3 17.5H10M1 19.5H12" stroke="#c02018" stroke-width="1.5"/><path d="M3 16.5H10M3 18.5H10" stroke="#400" stroke-width=".8"/></svg>
<svg style="left:886px;top:413px" width="24" height="24" viewBox="0 0 24 24"><path d="M10 3.4 Q18 2.6 18.6 6" stroke="#000" stroke-width="1.2" fill="none"/><path d="M18.6 8 l-2.4 -3.4 h4.8Z" fill="#000"/><path d="M15 13 Q8 13.6 7 10" stroke="#000" stroke-width="1.2" fill="none"/><path d="M6.6 8 l-2.4 3.4 h4.8Z" fill="#000"/><rect x="1.5" y="0.5" width="8.4" height="8.4" fill="url(#gBlue)" stroke="#2a3440" stroke-width="1.1"/><rect x="14.5" y="6.9" width="8.8" height="8.8" fill="url(#gBlue)" stroke="#2a3440" stroke-width="1.1"/><circle cx="6.6" cy="17" r="4.4" fill="none" stroke="#e02820" stroke-width="1.3" stroke-dasharray="1.6 1.2"/><path d="M3 20 l3.4 .2 l-1.4 2.4Z" fill="#e02820"/></svg>
<svg style="left:920px;top:413px" width="24" height="24" viewBox="0 0 24 24"><rect x="1" y="3.4" width="6" height="4.6" rx=".8" fill="#f6c63a" stroke="#c4a048" stroke-width=".8"/><rect x="1.6" y="4" width="4.8" height="1.6" fill="#fbe9a0"/><rect x="13" y="0.6" width="6" height="5" rx=".8" fill="#f6c63a" stroke="#c4a048" stroke-width=".8"/><rect x="13.6" y="1.2" width="4.8" height="1.6" fill="#fbe9a0"/><rect x="18" y="6.6" width="5.6" height="6" rx=".8" fill="#f6c63a" stroke="#c4a048" stroke-width=".8"/><rect x="18.6" y="7.2" width="4.4" height="1.6" fill="#fbe9a0"/><rect x="10" y="10" width="6" height="6" rx=".8" fill="#f6c63a" stroke="#c4a048" stroke-width=".8"/><rect x="10.6" y="10.6" width="4.8" height="1.6" fill="#fbe9a0"/><rect x="1" y="17.6" width="6" height="5.6" rx=".8" fill="#f6c63a" stroke="#c4a048" stroke-width=".8"/><rect x="1.6" y="18.2" width="4.8" height="1.6" fill="#fbe9a0"/><rect x="11" y="16.6" width="6" height="6.4" rx=".8" fill="#f6c63a" stroke="#c4a048" stroke-width=".8"/><rect x="11.6" y="17.2" width="4.8" height="1.6" fill="#fbe9a0"/><rect x="16" y="12" width="3" height="3" rx=".8" fill="#f6c63a" stroke="#c4a048" stroke-width=".8"/><rect x="16.6" y="12.6" width="1.8" height="1.6" fill="#fbe9a0"/></svg>
<svg style="left:954px;top:413px" width="24" height="24" viewBox="0 0 24 24"><path d="M9 10.5 L18 4.6M9 10.5 L18 20M20.4 8V17" stroke="#d42416" stroke-width="1.25" fill="none"/><rect x=".5" y="7" width="9" height="7" fill="#f8c838" stroke="#5a4810" stroke-width="1"/><rect x="17.2" y="1" width="6.2" height="6.8" fill="#f8c838" stroke="#5a4810" stroke-width="1"/><rect x="17.2" y="17" width="6.2" height="6.4" fill="#f8c838" stroke="#5a4810" stroke-width="1"/></svg>
<svg style="left:852px;top:560.8px" width="24" height="24" viewBox="0 0 24 24"><path d="M1 23 Q4 18 5 10 Q7 2 10 12 Q13 24 17 22 Q20 20 22 0" stroke="#8a8a8a" stroke-width="1" fill="none"/><path d="M0 12.5H24" stroke="#d42416" stroke-width="1.25" fill="none"/><rect x="1.4" y="10.3" width="4.4" height="4.4" fill="#6a8af0" stroke="#1010d0" stroke-width="1.1"/><rect x="8.4" y="10.3" width="4.4" height="4.4" fill="#6a8af0" stroke="#1010d0" stroke-width="1.1"/><rect x="18.2" y="10.3" width="4.4" height="4.4" fill="#6a8af0" stroke="#1010d0" stroke-width="1.1"/></svg>
<svg style="left:886px;top:560.8px" width="24" height="24" viewBox="0 0 24 24"><path d="M0 0 Q6 3 11.5 3.5 Q20 6 17 10 Q12 13 4 12 Q-2 16 6 20 Q14 21 24 23" stroke="#8a8a8a" stroke-width="1" fill="none"/><path d="M11.5 1V23" stroke="#d42416" stroke-width="1.25" fill="none"/><rect x="9.3" y="1.4" width="4.4" height="4.4" fill="#6a8af0" stroke="#1010d0" stroke-width="1.1"/><rect x="9.3" y="8.4" width="4.4" height="4.4" fill="#6a8af0" stroke="#1010d0" stroke-width="1.1"/><rect x="9.3" y="18" width="4.4" height="4.4" fill="#6a8af0" stroke="#1010d0" stroke-width="1.1"/></svg>
<svg style="left:920px;top:560.8px" width="24" height="24" viewBox="0 0 24 24"><path d="M0 21 Q2 18 2.5 15.5 Q6 6 11.5 12 Q14 22 20.5 15.5 Q23 12 24 11" stroke="#8a8a8a" stroke-width="1" fill="none"/><path d="M2.5 0V15M11.5 0V12M20.5 0V15" stroke="#d42416" stroke-width="1.25" fill="none"/><path d="M2.5 1.6H11.5" stroke="#000" stroke-width="1" fill="none"/><path d="M2.9 1.6 l2.4 -1.8 v3.6Z" fill="#000"/><path d="M11.1 1.6 l-2.4 -1.8 v3.6Z" fill="#000"/><path d="M11.5 1.6H20.5" stroke="#000" stroke-width="1" fill="none"/><path d="M11.9 1.6 l2.4 -1.8 v3.6Z" fill="#000"/><path d="M20.1 1.6 l-2.4 -1.8 v3.6Z" fill="#000"/><rect x="0.3" y="13.4" width="4.4" height="4.4" fill="#6a8af0" stroke="#1010d0" stroke-width="1.1"/><rect x="9.3" y="9.8" width="4.4" height="4.4" fill="#6a8af0" stroke="#1010d0" stroke-width="1.1"/><rect x="18.3" y="13.4" width="4.4" height="4.4" fill="#6a8af0" stroke="#1010d0" stroke-width="1.1"/></svg>
<svg style="left:956px;top:560.8px" width="24" height="24" viewBox="0 0 24 24"><path d="M2 24 Q-2 18 6 20.5 M6 20.5 Q2 14 9 11.5 Q16 8 6 2.5" stroke="#8a8a8a" stroke-width="1" fill="none"/><path d="M6 2.5H22M9 11.5H22M6 20.5H22" stroke="#d42416" stroke-width="1.25" fill="none"/><path d="M20.6 2.5V11.5" stroke="#000" stroke-width="1" fill="none"/><path d="M20.6 2.9 l-1.8 2.4 h3.6Z" fill="#000"/><path d="M20.6 11.1 l-1.8 -2.4 h3.6Z" fill="#000"/><path d="M20.6 11.5V20.5" stroke="#000" stroke-width="1" fill="none"/><path d="M20.6 11.9 l-1.8 2.4 h3.6Z" fill="#000"/><path d="M20.6 20.1 l-1.8 -2.4 h3.6Z" fill="#000"/><rect x="3.4" y="0.4" width="4.4" height="4.4" fill="#6a8af0" stroke="#1010d0" stroke-width="1.1"/><rect x="6.4" y="9.3" width="4.4" height="4.4" fill="#6a8af0" stroke="#1010d0" stroke-width="1.1"/><rect x="3.4" y="18.2" width="4.4" height="4.4" fill="#6a8af0" stroke="#1010d0" stroke-width="1.1"/></svg>
<div class="t" style="left:721.7px;top:481px;font-size:12px;letter-spacing:0.55px;">水平(<u>H</u>):</div>
<div class="inp" style="left:772.8px;top:474px;width:49px;height:26.4px"></div>
<div class="t" style="left:777px;top:480.8px;font-size:12.5px;letter-spacing:0.07px;">0.0</div>
<div class="spin" style="left:822px;top:474px;height:13px;width:10px"></div><svg style="left:822px;top:474px" width="10" height="13"><path d="M2 7.6 L5 4 L8 7.6Z" fill="#3d5fa8"/></svg><div class="spin" style="left:822px;top:487px;height:13px;width:10px"></div><svg style="left:822px;top:487px" width="10" height="13"><path d="M2 4.6 L5 8.2 L8 4.6Z" fill="#3d5fa8"/></svg>
<div class="t" style="left:835.6px;top:481px;font-size:12px;letter-spacing:0.51px;">垂直(<u>V</u>):</div>
<div class="inp" style="left:886px;top:474px;width:48px;height:26.4px"></div>
<div class="t" style="left:890px;top:480.8px;font-size:12.5px;letter-spacing:0.10px;">0.0</div>
<div class="spin" style="left:934px;top:474px;height:13px;width:10px"></div><svg style="left:934px;top:474px" width="10" height="13"><path d="M2 7.6 L5 4 L8 7.6Z" fill="#3d5fa8"/></svg><div class="spin" style="left:934px;top:487px;height:13px;width:10px"></div><svg style="left:934px;top:487px" width="10" height="13"><path d="M2 4.6 L5 8.2 L8 4.6Z" fill="#3d5fa8"/></svg>
<div class="a" style="left:954px;top:475px;width:24px;height:24px;background:linear-gradient(90deg,#b8c2d0 0,#a4b2c6 20%,#c9d2dd 35%,#8fa2ba 48%,#b4c0d0 55%,#c4ccd8 75%,#9fb0c6 100%);filter:blur(.6px)"></div>
<div class="t" style="left:811px;top:537.5px;font-size:12px;letter-spacing:0.02px;">基準:</div>
<div class="inp" style="left:844px;top:532px;width:138px;height:23.4px;border-color:#9a9a9a #b4b4b4 #c4c4c4 #9a9a9a"></div><div class="a" style="left:961.5px;top:533px;width:19.5px;height:21.4px;box-sizing:border-box;border:1px solid #707070;border-radius:2px;background:linear-gradient(#f2f2f2 0,#ebebeb 45%,#dddddd 50%,#cfcfcf 100%)"></div><svg style="left:966.2px;top:541.3px" width="10" height="6"><path d="M1 .6 H9 L5 5.4Z" fill="#000"/></svg>
<div class="t" style="left:847px;top:537.4px;font-size:12.5px;letter-spacing:0.16px;">Middle of selection</div>
<div class="a" style="left:990.5px;top:120.6px;width:29px;height:679px;background:#efefef"></div>
<div class="a" style="left:990.5px;top:120.6px;width:1px;height:476px;background:#fafafa"></div>
<div class="a" style="left:1019.6px;top:120.6px;width:2px;height:679px;background:#f8f9fd"></div>
<div class="a" style="left:687.2px;top:120.6px;width:332px;height:1.4px;background:#0a0a0a"></div>
<div class="a" style="left:996px;top:370px;width:0;height:0"><div style="position:absolute;left:0;top:0;transform:rotate(-90deg);transform-origin:0 0"><div class="t" style="left:0.3px;top:1.5px;font-size:13px;letter-spacing:-1.22px;">PNG</div><div class="t" style="left:29.5px;top:1.5px;font-size:13px;letter-spacing:-1.52px;">画像にエクスポート</div><div class="t" style="left:135.8px;top:1.5px;font-size:13px;letter-spacing:-0.05px;">(E)</div><div class="t" style="left:159.7px;top:1.5px;font-size:13px;letter-spacing:0.30px;">(Shift+Ctrl+E)</div></div></div>
<svg style="left:997px;top:370px" width="13" height="13" viewBox="0 0 13 13"><path d="M1 1 H9 V12 H1Z" fill="#fafafa" stroke="#333" stroke-width="1.1"/><path d="M6 1 V4 H9" fill="none" stroke="#333" stroke-width=".9"/><path d="M5 8.5H12" stroke="#222" stroke-width="1.2"/><path d="M10 6.4 L12.8 8.5 L10 10.6Z" fill="#222"/></svg>
<svg style="left:869.4px;top:228.6px" width="12" height="19" viewBox="0 0 12 19"><path d="M.8 .8 V15 L4.2 11.8 L6.6 17.4 L9 16.4 L6.6 11 L11 10.8 Z" fill="#fff" stroke="#000" stroke-width="1"/></svg>
<div class="a" style="left:884.8px;top:241.8px;width:135.6px;height:20.8px;box-sizing:border-box;border:1px solid #000;background:#ffffe1"></div>
<div class="t" style="left:888px;top:245.7px;font-size:13px;letter-spacing:-1.22px;">中心を垂直軸に合わせる</div>
<div class="a" style="left:1021.5px;top:120px;width:30px;height:680px;background:linear-gradient(90deg,#cfd5ea,#d3d9ec 50%,#d1d7eb)"></div>
<div class="hsep" style="left:1026px;top:152.5px;width:20px"></div>
<div class="hsep" style="left:1026px;top:295.5px;width:20px"></div>
<div class="hsep" style="left:1026px;top:464px;width:20px"></div>
<div class="hsep" style="left:1026px;top:579.5px;width:20px"></div>
<div class="tog" style="left:1023px;top:123.4px;width:25.6px;height:23px;border-color:#6a7080"></div>
<svg style="left:1026.6px;top:126px" width="18" height="18" viewBox="0 0 18 18"><path d="M4.4 4.4 L11.6 11.6" stroke="#000" stroke-width="1.5"/><path d="M13.8 13.8 L8.6 12.4 L12.4 8.6Z" fill="#000"/><path d="M3.4 0.8 l2.6 2.6 l-2.6 2.6 l-2.6 -2.6 Z" fill="#c8ccff" stroke="#1a1ae0" stroke-width="1.2"/><path d="M14.4 12 l2.6 2.6 l-2.6 2.6 l-2.6 -2.6 Z" fill="#d0ecd0" stroke="#1a7a2a" stroke-width="1.2"/></svg>
<svg style="left:1026.6px;top:164px" width="18" height="18" viewBox="0 0 18 18"><path d="M4.4 4.4 L11.6 11.6" stroke="#000" stroke-width="1.5"/><path d="M13.8 13.8 L8.6 12.4 L12.4 8.6Z" fill="#000"/><path d="M3.4 0.8 l2.6 2.6 l-2.6 2.6 l-2.6 -2.6 Z" fill="#c8ccff" stroke="#1a1ae0" stroke-width="1.2"/><path d="M14.4 12 l2.6 2.6 l-2.6 2.6 l-2.6 -2.6 Z" fill="#d0ecd0" stroke="#1a7a2a" stroke-width="1.2"/></svg>
<svg style="left:1026.6px;top:190px" width="18" height="18" viewBox="0 0 18 18"><path d="M2 13.5H15M14.5 2V13" stroke="#555" stroke-width="1.2" stroke-dasharray="1.4 1.2" fill="none"/><path d="M9 3.4h6" stroke="#8a8" stroke-width="1" stroke-dasharray="1 1"/></svg>
<svg style="left:1026.6px;top:216px" width="18" height="18" viewBox="0 0 18 18"><path d="M2 5.5H10M13.5 2V14" stroke="#555" stroke-width="1.2" stroke-dasharray="1.4 1.2" fill="none"/><path d="M13.5 7.6 l2.4 2.4 l-2.4 2.4 l-2.4 -2.4 Z" fill="#bcc" stroke="#567" stroke-width="1.2"/></svg>
<svg style="left:1026.6px;top:242px" width="18" height="18" viewBox="0 0 18 18"><path d="M2 13.5H12M13.5 2V14" stroke="#555" stroke-width="1.2" stroke-dasharray="1.4 1.2" fill="none"/><path d="M13.5 3.6 l2.4 2.4 l-2.4 2.4 l-2.4 -2.4 Z" fill="#bcc" stroke="#567" stroke-width="1.2"/></svg>
<svg style="left:1026.6px;top:268px" width="18" height="18" viewBox="0 0 18 18"><path d="M2 14.5H14.5V4" stroke="#555" stroke-width="1.2" stroke-dasharray="1.4 1.2" fill="none"/><path d="M5 3.8 l1.8 1.8 l-1.8 1.8 l-1.8 -1.8 Z" fill="#cfe8cf" stroke="#2a8a3a" stroke-width="1.2"/></svg>
<div class="tog" style="left:1023px;top:303.4px;width:25.6px;height:23px;border-color:#6a7080"></div>
<svg style="left:1026.6px;top:306px" width="18" height="18" viewBox="0 0 18 18"><path d="M4.4 4.4 L11.6 11.6" stroke="#000" stroke-width="1.5"/><path d="M13.8 13.8 L8.6 12.4 L12.4 8.6Z" fill="#000"/><path d="M3.4 0.8 l2.6 2.6 l-2.6 2.6 l-2.6 -2.6 Z" fill="#c8ccff" stroke="#1a1ae0" stroke-width="1.2"/><path d="M14.4 12 l2.6 2.6 l-2.6 2.6 l-2.6 -2.6 Z" fill="#d0ecd0" stroke="#1a7a2a" stroke-width="1.2"/></svg>
<svg style="left:1026.6px;top:332px" width="18" height="18" viewBox="0 0 18 18"><path d="M2 3 Q10 3 11.6 10 Q12 13 9 14" fill="none" stroke="#2a8a2a" stroke-width="1.5"/><path d="M11 6 Q15 9 15.6 12" fill="none" stroke="#2a8a2a" stroke-width="1.3"/></svg>
<svg style="left:1026.6px;top:358px" width="18" height="18" viewBox="0 0 18 18"><path d="M1.6 14.6 L16 3.4M9.6 1 L6.6 16" stroke="#444" stroke-width="1"/><path d="M8.2 6.6 l2 2 l-2 2 l-2 -2 Z" fill="#3a9a4a" stroke="#1a7a2a" stroke-width="1.2"/></svg>
<div class="tog" style="left:1023px;top:381.4px;width:25.6px;height:23px;border-color:#6a7080"></div>
<svg style="left:1026.6px;top:384px" width="18" height="18" viewBox="0 0 18 18"><path d="M1.6 2.6 Q8 3 10 9 Q11 13 7 14.4M10 9 Q14 10 15.4 7" fill="none" stroke="#444" stroke-width="1.1"/><path d="M7 11.6 l2.4 2.4 l-2.4 2.4 l-2.4 -2.4 Z" fill="#bfe6bf" stroke="#1a7a2a" stroke-width="1.2"/></svg>
<svg style="left:1026.6px;top:410px" width="18" height="18" viewBox="0 0 18 18"><path d="M2 3 Q8 3.4 9 8 Q10 14 16 12" fill="none" stroke="#444" stroke-width="1.1"/><rect x="6.6" y="2.6" width="4" height="4" fill="#bfe6bf" stroke="#1a7a2a" stroke-width="1.1"/></svg>
<svg style="left:1026.6px;top:436px" width="18" height="18" viewBox="0 0 18 18"><path d="M1.6 15 L16 3.6" stroke="#c82820" stroke-width="1.1"/><path d="M3.6 10.6 L6.4 16M6.6 8.4 L9.2 13.6M11.6 4.4 L14.2 9.6" stroke="#c82820" stroke-width="1.1"/><path d="M9.6 6.4 l2 2 l-2 2 l-2 -2 Z" fill="#3a9a4a" stroke="#1a7a2a" stroke-width="1.2"/></svg>
<div class="tog" style="left:1023px;top:471.4px;width:25.6px;height:23px;border-color:#6a7080"></div>
<svg style="left:1026.6px;top:474px" width="18" height="18" viewBox="0 0 18 18"><path d="M4.4 4.4 L11.6 11.6" stroke="#000" stroke-width="1.5"/><path d="M13.8 13.8 L8.6 12.4 L12.4 8.6Z" fill="#000"/><path d="M3.4 0.8 l2.6 2.6 l-2.6 2.6 l-2.6 -2.6 Z" fill="#c8ccff" stroke="#1a1ae0" stroke-width="1.2"/><path d="M14.4 12 l2.6 2.6 l-2.6 2.6 l-2.6 -2.6 Z" fill="#d0ecd0" stroke="#1a7a2a" stroke-width="1.2"/></svg>
<svg style="left:1026.6px;top:500px" width="18" height="18" viewBox="0 0 18 18"><path d="M3 14.5H14.5V3" fill="none" stroke="#666" stroke-width="1"/><circle cx="6.4" cy="7.6" r="1.9" fill="#cfe8cf" stroke="#2a8a3a" stroke-width="1.2"/></svg>
<svg style="left:1026.6px;top:526px" width="18" height="18" viewBox="0 0 18 18"><path d="M2 15.5H15" stroke="#333" stroke-width="1.2" stroke-dasharray="1.4 1"/><path d="M14.5 2V15" stroke="#333" stroke-width="1.2" stroke-dasharray="1.4 1"/><path d="M3 8H11M7 4V12" stroke="#111" stroke-width="1.5"/></svg>
<svg style="left:1026.6px;top:552px" width="18" height="18" viewBox="0 0 18 18"><path d="M3.2 14 L8 1.6 H11 L15.8 14 H12.6 L11.6 11.2 H7.2 L6.2 14Z M8 8.8 H10.8 L9.4 4.6Z" fill="#111" fill-rule="evenodd"/><path d="M2 15.4 L16 12.6" stroke="#2a8a3a" stroke-width="1.2"/><path d="M3 12.8 l2.2 2.2 l-2.2 2.2 l-2.2 -2.2 Z" fill="#bfe6bf" stroke="#1a7a2a" stroke-width="1.2"/></svg>
<svg style="left:1026.6px;top:590px" width="18" height="18" viewBox="0 0 18 18"><defs><linearGradient id="gPg" x1="0" y1="0" x2="1" y2="1"><stop offset="0" stop-color="#fff"/><stop offset="1" stop-color="#9a9a9a"/></linearGradient></defs><rect x="4.6" y="2.4" width="9.6" height="13" fill="url(#gPg)" stroke="#111" stroke-width="1.1"/></svg>
<div class="tog" style="left:1023px;top:613.4px;width:25.6px;height:23px;border-color:#6a7080"></div>
<svg style="left:1026.6px;top:616px" width="18" height="18" viewBox="0 0 18 18"><path d="M5.5 1V17M9.5 1V17M13.5 1V17M1.6 5H17M1.6 9H17M1.6 13H17" stroke="#1818d8" stroke-width="1.3"/></svg>
<div class="tog" style="left:1023px;top:640px;width:25.6px;height:23px;border-color:#6a7080"></div>
<svg style="left:1026.6px;top:642px" width="18" height="18" viewBox="0 0 18 18"><path d="M3.6 2V16M14.6 2V16M6.4 16 L12 2" stroke="#1818d8" stroke-width="1.3"/></svg>
<div class="a" style="left:16px;top:799.6px;width:1036px;height:19px;background:#f4f4f4"></div>
<div class="a" style="left:16px;top:800.2px;width:1024.4px;height:1.6px;background:#0a0a0a"></div>
<div class="a" style="left:32px;top:801.8px;width:1008px;height:14.2px;background:linear-gradient(90deg,#000000 0px,#000000 14px,#1a1a1a 14px,#1a1a1a 28px,#333333 28px,#333333 42px,#4d4d4d 42px,#4d4d4d 56px,#666666 56px,#666666 70px,#808080 70px,#808080 84px,#999999 84px,#999999 98px,#b3b3b3 98px,#b3b3b3 112px,#cccccc 112px,#cccccc 126px,#e6e6e6 126px,#e6e6e6 140px,#ececec 140px,#ececec 154px,#f2f2f2 154px,#f2f2f2 168px,#f9f9f9 168px,#f9f9f9 182px,#ffffff 182px,#ffffff 196px,#800000 196px,#800000 210px,#ff0000 210px,#ff0000 224px,#808000 224px,#808000 238px,#ffff00 238px,#ffff00 252px,#008000 252px,#008000 266px,#00ff00 266px,#00ff00 280px,#008080 280px,#008080 294px,#00ffff 294px,#00ffff 308px,#000080 308px,#000080 322px,#0000ff 322px,#0000ff 336px,#800080 336px,#800080 350px,#ff00ff 350px,#ff00ff 364px,#2b0000 364px,#2b0000 378px,#550000 378px,#550000 392px,#800000 392px,#800000 406px,#aa0000 406px,#aa0000 420px,#d40000 420px,#d40000 434px,#ff0000 434px,#ff0000 448px,#ff2a2a 448px,#ff2a2a 462px,#ff5555 462px,#ff5555 476px,#ff8080 476px,#ff8080 490px,#ffaaaa 490px,#ffaaaa 504px,#ffd5d5 504px,#ffd5d5 518px,#280b0b 518px,#280b0b 532px,#501616 532px,#501616 546px,#782121 546px,#782121 560px,#a02c2c 560px,#a02c2c 574px,#c83737 574px,#c83737 588px,#d35f5f 588px,#d35f5f 602px,#de8787 602px,#de8787 616px,#e9afaf 616px,#e9afaf 630px,#f4d7d7 630px,#f4d7d7 644px,#241c1c 644px,#241c1c 658px,#483737 658px,#483737 672px,#6c5353 672px,#6c5353 686px,#916f6f 686px,#916f6f 700px,#ac9393 700px,#ac9393 714px,#c8b7b7 714px,#c8b7b7 728px,#e3dbdb 728px,#e3dbdb 742px,#2b1100 742px,#2b1100 756px,#552200 756px,#552200 770px,#803300 770px,#803300 784px,#aa4400 784px,#aa4400 798px,#d45500 798px,#d45500 812px,#ff6600 812px,#ff6600 826px,#ff7f2a 826px,#ff7f2a 840px,#ff9955 840px,#ff9955 854px,#ffb380 854px,#ffb380 868px,#ffccaa 868px,#ffccaa 882px,#ffe6d5 882px,#ffe6d5 896px,#28170b 896px,#28170b 910px,#502d16 910px,#502d16 924px,#784421 924px,#784421 938px,#a05a2c 938px,#a05a2c 952px,#c87137 952px,#c87137 966px,#d38d5f 966px,#d38d5f 980px,#deaa87 980px,#deaa87 994px,#e9c6af 994px,#e9c6af 1008px)"></div>
<svg style="left:17px;top:801.8px" width="15" height="14.2" viewBox="0 0 15 14.2"><rect width="15" height="14.2" fill="#fff"/><path d="M.6 .6 L14.4 13.6 M14.4 .6 L.6 13.6" stroke="#8a1a10" stroke-width="1.5"/><rect x=".5" y=".5" width="14" height="13.2" fill="none" stroke="#222" stroke-width="1"/></svg>
<svg style="left:1042.6px;top:801px" width="6" height="8"><path d="M5 .4 L.6 3.8 L5 7.2Z" fill="#000"/></svg>
</body>
</html>
